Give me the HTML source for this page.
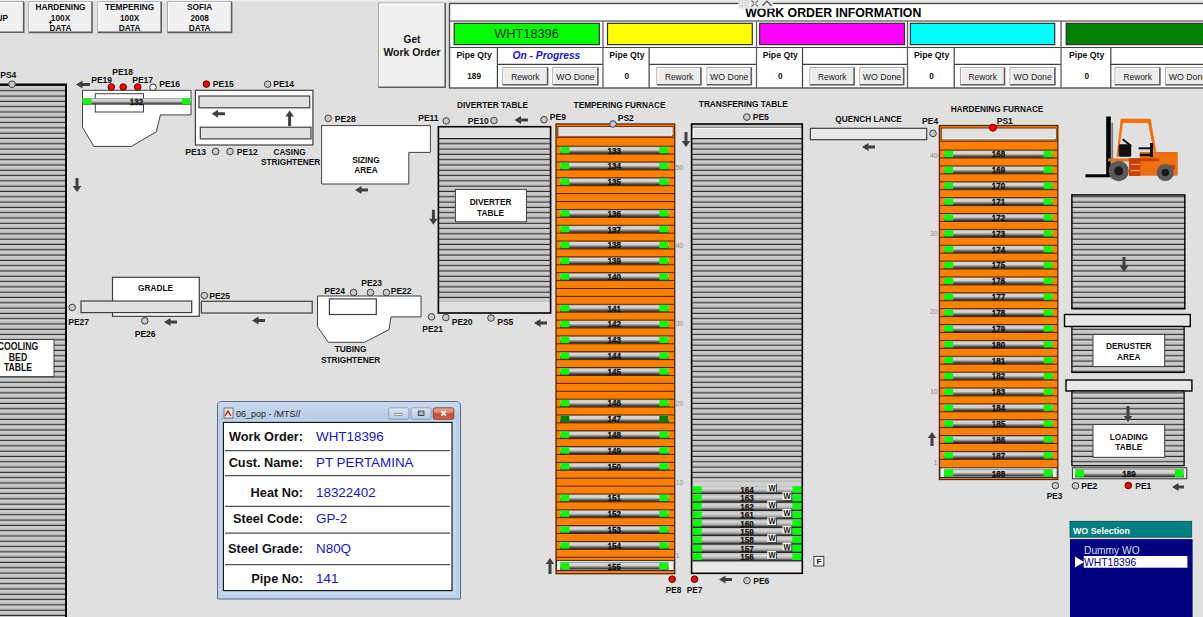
<!DOCTYPE html><html><head><meta charset="utf-8"><style>
html,body{margin:0;padding:0;background:#e0e0e0;overflow:hidden;width:1203px;height:617px}
svg{display:block;font-family:"Liberation Sans", sans-serif}
</style></head><body>
<svg width="1203" height="617" viewBox="0 0 1203 617">
<defs>
<pattern id="stripe" patternUnits="userSpaceOnUse" x="0" y="0.3" width="10" height="5.3">
<rect x="0" y="0" width="10" height="5.3" fill="#c6c6c6"/>
<rect x="0" y="0" width="10" height="1.2" fill="#2a2a2a"/>
<rect x="0" y="1.2" width="10" height="0.9" fill="#e2e2e2"/>
<rect x="0" y="4.3" width="10" height="1.0" fill="#a4a4a4"/>
</pattern>
<linearGradient id="pipeg" x1="0" y1="0" x2="0" y2="1">
<stop offset="0" stop-color="#707070"/>
<stop offset="0.15" stop-color="#d8d8d8"/>
<stop offset="0.45" stop-color="#d0d0d0"/>
<stop offset="0.8" stop-color="#5a5a5a"/>
<stop offset="1" stop-color="#1a1a1a"/>
</linearGradient>
<linearGradient id="pipet" x1="0" y1="0" x2="0" y2="1">
<stop offset="0" stop-color="#b8b8b8"/>
<stop offset="0.25" stop-color="#dadada"/>
<stop offset="0.6" stop-color="#a8a8a8"/>
<stop offset="0.8" stop-color="#404040"/>
<stop offset="0.92" stop-color="#202020"/>
<stop offset="1" stop-color="#909090"/>
</linearGradient>
<linearGradient id="btng" x1="0" y1="0" x2="0" y2="1">
<stop offset="0" stop-color="#f4f4f4"/>
<stop offset="1" stop-color="#e6e6e6"/>
</linearGradient>
<linearGradient id="titleg" x1="0" y1="0" x2="0" y2="1">
<stop offset="0" stop-color="#c9daee"/>
<stop offset="1" stop-color="#b4cbe6"/>
</linearGradient>
<linearGradient id="closeg" x1="0" y1="0" x2="0" y2="1">
<stop offset="0" stop-color="#e6b0a0"/>
<stop offset="0.45" stop-color="#d87a66"/>
<stop offset="0.55" stop-color="#c8452e"/>
<stop offset="1" stop-color="#d06a50"/>
</linearGradient>
<linearGradient id="minig" x1="0" y1="0" x2="0" y2="1">
<stop offset="0" stop-color="#dfe9f5"/>
<stop offset="0.5" stop-color="#c4d6ec"/>
<stop offset="1" stop-color="#b6cbe5"/>
</linearGradient>
</defs>
<rect x="0" y="0" width="1203" height="617" fill="#e0e0e0"/>
<rect x="0" y="0" width="1203" height="1.2" fill="#f0f0f4"/>

<rect x="-4" y="1" width="28.5" height="32" fill="#f0f0f0" stroke="none" stroke-width="1"/>
<path d="M-3.5,32.5 V1.5 H24.0" stroke="#a8a8a8" stroke-width="1" fill="none"/>
<path d="M-2.5,31.5 V2.5 H23.0" stroke="#ffffff" stroke-width="1" fill="none"/>
<path d="M-3.5,32.2 H23.7 V1.5" stroke="#5e5e5e" stroke-width="1.6" fill="none"/>
<text x="8" y="20.5" font-size="9.2" font-weight="bold" text-anchor="end" fill="#111" textLength="11.5" lengthAdjust="spacingAndGlyphs">UP</text>
<rect x="28.2" y="1.2" width="64.6" height="32.0" fill="#f0f0f0" stroke="none" stroke-width="1"/>
<path d="M28.7,32.7 V1.7 H92.3" stroke="#a8a8a8" stroke-width="1" fill="none"/>
<path d="M29.7,31.700000000000003 V2.7 H91.3" stroke="#ffffff" stroke-width="1" fill="none"/>
<path d="M28.7,32.400000000000006 H92.0 V1.7" stroke="#5e5e5e" stroke-width="1.6" fill="none"/>
<text x="60.5" y="10.2" font-size="9.2" font-weight="bold" text-anchor="middle" fill="#111" textLength="50.14" lengthAdjust="spacingAndGlyphs">HARDENING</text>
<text x="60.5" y="20.7" font-size="9.2" font-weight="bold" text-anchor="middle" fill="#111" textLength="19.34" lengthAdjust="spacingAndGlyphs">100X</text>
<text x="60.5" y="31.2" font-size="9.2" font-weight="bold" text-anchor="middle" fill="#111" textLength="21.77" lengthAdjust="spacingAndGlyphs">DATA</text>
<rect x="97.3" y="1.2" width="64.7" height="32.0" fill="#f0f0f0" stroke="none" stroke-width="1"/>
<path d="M97.8,32.7 V1.7 H161.5" stroke="#a8a8a8" stroke-width="1" fill="none"/>
<path d="M98.8,31.700000000000003 V2.7 H160.5" stroke="#ffffff" stroke-width="1" fill="none"/>
<path d="M97.8,32.400000000000006 H161.2 V1.7" stroke="#5e5e5e" stroke-width="1.6" fill="none"/>
<text x="129.65" y="10.2" font-size="9.2" font-weight="bold" text-anchor="middle" fill="#111" textLength="49.22" lengthAdjust="spacingAndGlyphs">TEMPERING</text>
<text x="129.65" y="20.7" font-size="9.2" font-weight="bold" text-anchor="middle" fill="#111" textLength="19.34" lengthAdjust="spacingAndGlyphs">100X</text>
<text x="129.65" y="31.2" font-size="9.2" font-weight="bold" text-anchor="middle" fill="#111" textLength="21.77" lengthAdjust="spacingAndGlyphs">DATA</text>
<rect x="167" y="1.2" width="65.4" height="32.0" fill="#f0f0f0" stroke="none" stroke-width="1"/>
<path d="M167.5,32.7 V1.7 H231.9" stroke="#a8a8a8" stroke-width="1" fill="none"/>
<path d="M168.5,31.700000000000003 V2.7 H230.9" stroke="#ffffff" stroke-width="1" fill="none"/>
<path d="M167.5,32.400000000000006 H231.6 V1.7" stroke="#5e5e5e" stroke-width="1.6" fill="none"/>
<text x="199.7" y="10.2" font-size="9.2" font-weight="bold" text-anchor="middle" fill="#111" textLength="25.3" lengthAdjust="spacingAndGlyphs">SOFIA</text>
<text x="199.7" y="20.7" font-size="9.2" font-weight="bold" text-anchor="middle" fill="#111" textLength="18.42" lengthAdjust="spacingAndGlyphs">2008</text>
<text x="199.7" y="31.2" font-size="9.2" font-weight="bold" text-anchor="middle" fill="#111" textLength="21.77" lengthAdjust="spacingAndGlyphs">DATA</text>
<rect x="378" y="2.5" width="68" height="85.5" fill="#f0f0f0" stroke="none" stroke-width="1"/>
<path d="M378.5,87.5 V3.0 H445.5" stroke="#a8a8a8" stroke-width="1" fill="none"/>
<path d="M379.5,86.5 V4.0 H444.5" stroke="#ffffff" stroke-width="1" fill="none"/>
<path d="M378.5,87.2 H445.2 V3.0" stroke="#5e5e5e" stroke-width="1.6" fill="none"/>
<text x="412" y="42.6" font-size="10.2" font-weight="bold" text-anchor="middle" fill="#111" textLength="17.0" lengthAdjust="spacingAndGlyphs">Get</text>
<text x="412" y="55.6" font-size="10.2" font-weight="bold" text-anchor="middle" fill="#111" textLength="57.04" lengthAdjust="spacingAndGlyphs">Work Order</text>
<rect x="449.5" y="3.5" width="760.5" height="84.5" fill="#ffffff" stroke="#505050" stroke-width="1.4"/>
<line x1="449" y1="21" x2="1203" y2="21" stroke="#303030" stroke-width="1.2"/>
<text x="833.3" y="16.6" font-size="12.3" font-weight="bold" text-anchor="middle" fill="#000" textLength="176.06" lengthAdjust="spacingAndGlyphs">WORK ORDER INFORMATION</text>
<rect x="454.2" y="23.3" width="145.1" height="21.3" fill="#00ff00" stroke="#303030" stroke-width="1.2"/>
<line x1="449.2" y1="47.5" x2="603" y2="47.5" stroke="#404040" stroke-width="1.2"/>
<line x1="497.4" y1="47.5" x2="497.4" y2="88" stroke="#404040" stroke-width="1.2"/>
<line x1="497.4" y1="64.4" x2="603" y2="64.4" stroke="#404040" stroke-width="1.2"/>
<text x="474.1" y="58" font-size="8.7" font-weight="bold" text-anchor="middle" fill="#111" textLength="35.29" lengthAdjust="spacingAndGlyphs">Pipe Qty</text>
<text x="474.1" y="78.6" font-size="8.7" font-weight="bold" text-anchor="middle" fill="#111" textLength="13.79" lengthAdjust="spacingAndGlyphs">189</text>
<rect x="502.2" y="67" width="46.2" height="18.6" fill="#ececec" stroke="none" stroke-width="1"/>
<path d="M502.7,85.1 V67.5 H547.9" stroke="#a8a8a8" stroke-width="1" fill="none"/>
<path d="M503.7,84.1 V68.5 H546.9" stroke="#ffffff" stroke-width="1" fill="none"/>
<path d="M502.7,84.8 H547.6 V67.5" stroke="#5e5e5e" stroke-width="1.6" fill="none"/>
<rect x="552.3" y="67" width="46.4" height="18.6" fill="#ececec" stroke="none" stroke-width="1"/>
<path d="M552.8,85.1 V67.5 H598.2" stroke="#a8a8a8" stroke-width="1" fill="none"/>
<path d="M553.8,84.1 V68.5 H597.2" stroke="#ffffff" stroke-width="1" fill="none"/>
<path d="M552.8,84.8 H597.9000000000001 V67.5" stroke="#5e5e5e" stroke-width="1.6" fill="none"/>
<text x="525.3" y="80" font-size="9.5" font-weight="normal" text-anchor="middle" fill="#222" textLength="28.34" lengthAdjust="spacingAndGlyphs">Rework</text>
<text x="575.5" y="80" font-size="9.5" font-weight="normal" text-anchor="middle" fill="#222" textLength="38.37" lengthAdjust="spacingAndGlyphs">WO Done</text>
<line x1="603" y1="21" x2="603" y2="88" stroke="#606060" stroke-width="1.3"/>
<rect x="607.5" y="23.3" width="144.8" height="21.3" fill="#ffff00" stroke="#303030" stroke-width="1.2"/>
<line x1="603" y1="47.5" x2="756.5" y2="47.5" stroke="#404040" stroke-width="1.2"/>
<line x1="649.1" y1="47.5" x2="649.1" y2="88" stroke="#404040" stroke-width="1.2"/>
<line x1="649.1" y1="64.4" x2="756.5" y2="64.4" stroke="#404040" stroke-width="1.2"/>
<text x="626.85" y="58" font-size="8.7" font-weight="bold" text-anchor="middle" fill="#111" textLength="35.29" lengthAdjust="spacingAndGlyphs">Pipe Qty</text>
<text x="626.85" y="78.6" font-size="8.7" font-weight="bold" text-anchor="middle" fill="#111" textLength="4.6" lengthAdjust="spacingAndGlyphs">0</text>
<rect x="656.4" y="67" width="45.3" height="18.6" fill="#ececec" stroke="none" stroke-width="1"/>
<path d="M656.9,85.1 V67.5 H701.2" stroke="#a8a8a8" stroke-width="1" fill="none"/>
<path d="M657.9,84.1 V68.5 H700.2" stroke="#ffffff" stroke-width="1" fill="none"/>
<path d="M656.9,84.8 H700.9000000000001 V67.5" stroke="#5e5e5e" stroke-width="1.6" fill="none"/>
<rect x="706.5" y="67" width="45.6" height="18.6" fill="#ececec" stroke="none" stroke-width="1"/>
<path d="M707.0,85.1 V67.5 H751.6" stroke="#a8a8a8" stroke-width="1" fill="none"/>
<path d="M708.0,84.1 V68.5 H750.6" stroke="#ffffff" stroke-width="1" fill="none"/>
<path d="M707.0,84.8 H751.3000000000001 V67.5" stroke="#5e5e5e" stroke-width="1.6" fill="none"/>
<text x="679.05" y="80" font-size="9.5" font-weight="normal" text-anchor="middle" fill="#222" textLength="28.34" lengthAdjust="spacingAndGlyphs">Rework</text>
<text x="729.3" y="80" font-size="9.5" font-weight="normal" text-anchor="middle" fill="#222" textLength="38.37" lengthAdjust="spacingAndGlyphs">WO Done</text>
<line x1="756.5" y1="21" x2="756.5" y2="88" stroke="#606060" stroke-width="1.3"/>
<rect x="759.7" y="23.3" width="144.8" height="21.3" fill="#ff00ff" stroke="#303030" stroke-width="1.2"/>
<line x1="756.5" y1="47.5" x2="907.5" y2="47.5" stroke="#404040" stroke-width="1.2"/>
<line x1="802.5" y1="47.5" x2="802.5" y2="88" stroke="#404040" stroke-width="1.2"/>
<line x1="802.5" y1="64.4" x2="907.5" y2="64.4" stroke="#404040" stroke-width="1.2"/>
<text x="780.3" y="58" font-size="8.7" font-weight="bold" text-anchor="middle" fill="#111" textLength="35.29" lengthAdjust="spacingAndGlyphs">Pipe Qty</text>
<text x="780.3" y="78.6" font-size="8.7" font-weight="bold" text-anchor="middle" fill="#111" textLength="4.6" lengthAdjust="spacingAndGlyphs">0</text>
<rect x="809.5" y="67" width="45.4" height="18.6" fill="#ececec" stroke="none" stroke-width="1"/>
<path d="M810.0,85.1 V67.5 H854.4" stroke="#a8a8a8" stroke-width="1" fill="none"/>
<path d="M811.0,84.1 V68.5 H853.4" stroke="#ffffff" stroke-width="1" fill="none"/>
<path d="M810.0,84.8 H854.1 V67.5" stroke="#5e5e5e" stroke-width="1.6" fill="none"/>
<rect x="859.4" y="67" width="45.1" height="18.6" fill="#ececec" stroke="none" stroke-width="1"/>
<path d="M859.9,85.1 V67.5 H904.0" stroke="#a8a8a8" stroke-width="1" fill="none"/>
<path d="M860.9,84.1 V68.5 H903.0" stroke="#ffffff" stroke-width="1" fill="none"/>
<path d="M859.9,84.8 H903.7 V67.5" stroke="#5e5e5e" stroke-width="1.6" fill="none"/>
<text x="832.2" y="80" font-size="9.5" font-weight="normal" text-anchor="middle" fill="#222" textLength="28.34" lengthAdjust="spacingAndGlyphs">Rework</text>
<text x="881.95" y="80" font-size="9.5" font-weight="normal" text-anchor="middle" fill="#222" textLength="38.37" lengthAdjust="spacingAndGlyphs">WO Done</text>
<line x1="907.5" y1="21" x2="907.5" y2="88" stroke="#606060" stroke-width="1.3"/>
<rect x="910.4" y="23.3" width="144.3" height="21.3" fill="#00ffff" stroke="#303030" stroke-width="1.2"/>
<line x1="907.5" y1="47.5" x2="1061" y2="47.5" stroke="#404040" stroke-width="1.2"/>
<line x1="954.2" y1="47.5" x2="954.2" y2="88" stroke="#404040" stroke-width="1.2"/>
<line x1="954.2" y1="64.4" x2="1061" y2="64.4" stroke="#404040" stroke-width="1.2"/>
<text x="931.65" y="58" font-size="8.7" font-weight="bold" text-anchor="middle" fill="#111" textLength="35.29" lengthAdjust="spacingAndGlyphs">Pipe Qty</text>
<text x="931.65" y="78.6" font-size="8.7" font-weight="bold" text-anchor="middle" fill="#111" textLength="4.6" lengthAdjust="spacingAndGlyphs">0</text>
<rect x="960" y="67" width="45.3" height="18.6" fill="#ececec" stroke="none" stroke-width="1"/>
<path d="M960.5,85.1 V67.5 H1004.8" stroke="#a8a8a8" stroke-width="1" fill="none"/>
<path d="M961.5,84.1 V68.5 H1003.8" stroke="#ffffff" stroke-width="1" fill="none"/>
<path d="M960.5,84.8 H1004.5 V67.5" stroke="#5e5e5e" stroke-width="1.6" fill="none"/>
<rect x="1009.6" y="67" width="46.1" height="18.6" fill="#ececec" stroke="none" stroke-width="1"/>
<path d="M1010.1,85.1 V67.5 H1055.2" stroke="#a8a8a8" stroke-width="1" fill="none"/>
<path d="M1011.1,84.1 V68.5 H1054.2" stroke="#ffffff" stroke-width="1" fill="none"/>
<path d="M1010.1,84.8 H1054.9 V67.5" stroke="#5e5e5e" stroke-width="1.6" fill="none"/>
<text x="982.65" y="80" font-size="9.5" font-weight="normal" text-anchor="middle" fill="#222" textLength="28.34" lengthAdjust="spacingAndGlyphs">Rework</text>
<text x="1032.65" y="80" font-size="9.5" font-weight="normal" text-anchor="middle" fill="#222" textLength="38.37" lengthAdjust="spacingAndGlyphs">WO Done</text>
<line x1="1061" y1="21" x2="1061" y2="88" stroke="#606060" stroke-width="1.3"/>
<rect x="1066.2" y="23.3" width="144.8" height="21.3" fill="#008000" stroke="#303030" stroke-width="1.2"/>
<line x1="1061" y1="47.5" x2="1210" y2="47.5" stroke="#404040" stroke-width="1.2"/>
<line x1="1110.8" y1="47.5" x2="1110.8" y2="88" stroke="#404040" stroke-width="1.2"/>
<line x1="1110.8" y1="64.4" x2="1210" y2="64.4" stroke="#404040" stroke-width="1.2"/>
<text x="1086.7" y="58" font-size="8.7" font-weight="bold" text-anchor="middle" fill="#111" textLength="35.29" lengthAdjust="spacingAndGlyphs">Pipe Qty</text>
<text x="1086.7" y="78.6" font-size="8.7" font-weight="bold" text-anchor="middle" fill="#111" textLength="4.6" lengthAdjust="spacingAndGlyphs">0</text>
<rect x="1114.6" y="67" width="46.1" height="18.6" fill="#ececec" stroke="none" stroke-width="1"/>
<path d="M1115.1,85.1 V67.5 H1160.2" stroke="#a8a8a8" stroke-width="1" fill="none"/>
<path d="M1116.1,84.1 V68.5 H1159.2" stroke="#ffffff" stroke-width="1" fill="none"/>
<path d="M1115.1,84.8 H1159.9 V67.5" stroke="#5e5e5e" stroke-width="1.6" fill="none"/>
<rect x="1165" y="67" width="46" height="18.6" fill="#ececec" stroke="none" stroke-width="1"/>
<path d="M1165.5,85.1 V67.5 H1210.5" stroke="#a8a8a8" stroke-width="1" fill="none"/>
<path d="M1166.5,84.1 V68.5 H1209.5" stroke="#ffffff" stroke-width="1" fill="none"/>
<path d="M1165.5,84.8 H1210.2 V67.5" stroke="#5e5e5e" stroke-width="1.6" fill="none"/>
<text x="1137.65" y="80" font-size="9.5" font-weight="normal" text-anchor="middle" fill="#222" textLength="28.34" lengthAdjust="spacingAndGlyphs">Rework</text>
<text x="1188.0" y="80" font-size="9.5" font-weight="normal" text-anchor="middle" fill="#222" textLength="38.37" lengthAdjust="spacingAndGlyphs">WO Done</text>
<text x="526.5" y="37.6" font-size="12.8" font-weight="normal" text-anchor="middle" fill="#0a2a0a" textLength="64.73" lengthAdjust="spacingAndGlyphs">WHT18396</text>
<text x="546.4" y="59.3" font-size="10.8" font-weight="bold" text-anchor="middle" fill="#1414d8" textLength="67.84" lengthAdjust="spacingAndGlyphs" font-style="italic">On - Progress</text>
<rect x="-2" y="85" width="68" height="532" fill="url(#stripe)" stroke="none" stroke-width="1"/>
<path d="M-2,84.6 H66 V617" stroke="#000" stroke-width="2" fill="none"/>
<circle cx="12" cy="84.2" r="3.3" fill="#c8c8c8" stroke="#404040" stroke-width="1"/>
<text x="0.2" y="77.9" font-size="9.6" font-weight="bold" text-anchor="start" fill="#111" textLength="16.15" lengthAdjust="spacingAndGlyphs">PS4</text>
<polygon points="75.5,178 78.5,178 78.5,186 81.3,186 77,192 72.7,186 75.5,186" fill="#404040"/>
<rect x="-2" y="339.5" width="56" height="37.1" fill="#fff" stroke="#404040" stroke-width="1"/>
<text x="18" y="350.3" font-size="10.2" font-weight="bold" text-anchor="middle" fill="#111" textLength="40.46" lengthAdjust="spacingAndGlyphs">COOLING</text>
<text x="18" y="360.7" font-size="10.2" font-weight="bold" text-anchor="middle" fill="#111" textLength="18.31" lengthAdjust="spacingAndGlyphs">BED</text>
<text x="18" y="371.1" font-size="10.2" font-weight="bold" text-anchor="middle" fill="#111" textLength="28.25" lengthAdjust="spacingAndGlyphs">TABLE</text>
<polygon points="82.5,90.3 191,90.3 191,114.9 160.4,114.9 156.3,131.8 131.3,146.4 93.9,146.4 82.5,127.3" fill="#fff" stroke="#404040" stroke-width="1"/>
<rect x="95.3" y="93.7" width="48.2" height="18.3" fill="none" stroke="#404040" stroke-width="1"/>
<rect x="82.5" y="98.2" width="108.5" height="6.4" fill="url(#pipeg)" stroke="none" stroke-width="1"/>
<rect x="82.9" y="98.60000000000001" width="8.6" height="5.6" fill="#00ff00" stroke="none" stroke-width="1" stroke="#101010" stroke-width="0.8"/>
<rect x="182" y="98.60000000000001" width="8.6" height="5.6" fill="#00ff00" stroke="none" stroke-width="1" stroke="#101010" stroke-width="0.8"/>
<text x="136.5" y="104.9" font-size="9.5" font-weight="bold" text-anchor="middle" fill="#111" textLength="13.47" lengthAdjust="spacingAndGlyphs" stroke="#111" stroke-width="0.3">132</text>
<circle cx="111.3" cy="87" r="3.3" fill="#ff0000" stroke="#400000" stroke-width="0.9"/>
<circle cx="123.2" cy="87" r="3.3" fill="#ff0000" stroke="#400000" stroke-width="0.9"/>
<circle cx="137.7" cy="87" r="3.3" fill="#ff0000" stroke="#400000" stroke-width="0.9"/>
<circle cx="153" cy="87.3" r="3.3" fill="#f4f4f4" stroke="#303030" stroke-width="1"/>
<polygon points="76,84.5 82.5,80.5 82.5,83.0 90,83.0 90,86.0 82.5,86.0 82.5,88.5" fill="#404040"/>
<text x="91.2" y="82.6" font-size="9.6" font-weight="bold" text-anchor="start" fill="#111" textLength="20.9" lengthAdjust="spacingAndGlyphs">PE19</text>
<text x="112.2" y="74.9" font-size="9.6" font-weight="bold" text-anchor="start" fill="#111" textLength="20.9" lengthAdjust="spacingAndGlyphs">PE18</text>
<text x="132.2" y="82.6" font-size="9.6" font-weight="bold" text-anchor="start" fill="#111" textLength="20.9" lengthAdjust="spacingAndGlyphs">PE17</text>
<text x="159.2" y="86.9" font-size="9.6" font-weight="bold" text-anchor="start" fill="#111" textLength="20.9" lengthAdjust="spacingAndGlyphs">PE16</text>
<rect x="195.4" y="90.3" width="117.5" height="54.7" fill="#fff" stroke="#404040" stroke-width="1.2"/>
<rect x="199" y="96" width="110.7" height="11.8" fill="#e0e0e0" stroke="#404040" stroke-width="1.2"/>
<rect x="200.3" y="127.2" width="110.7" height="11.7" fill="#e0e0e0" stroke="#404040" stroke-width="1.2"/>
<polygon points="211.6,113.8 218.1,109.8 218.1,112.3 225,112.3 225,115.3 218.1,115.3 218.1,117.8" fill="#404040"/>
<polygon points="289.6,110.5 293.90000000000003,116.5 291.1,116.5 291.1,126 288.1,126 288.1,116.5 285.3,116.5" fill="#404040"/>
<circle cx="206.4" cy="84.1" r="3.3" fill="#ff0000" stroke="#400000" stroke-width="0.9"/>
<text x="212.8" y="87.4" font-size="9.6" font-weight="bold" text-anchor="start" fill="#111" textLength="20.9" lengthAdjust="spacingAndGlyphs">PE15</text>
<circle cx="267.7" cy="84.2" r="3.3" fill="#c8c8c8" stroke="#404040" stroke-width="1"/>
<text x="273.2" y="87.4" font-size="9.6" font-weight="bold" text-anchor="start" fill="#111" textLength="20.9" lengthAdjust="spacingAndGlyphs">PE14</text>
<text x="185.2" y="154.9" font-size="9.6" font-weight="bold" text-anchor="start" fill="#111" textLength="20.9" lengthAdjust="spacingAndGlyphs">PE13</text>
<circle cx="215.6" cy="151.5" r="3.3" fill="#c8c8c8" stroke="#404040" stroke-width="1"/>
<circle cx="230" cy="151.5" r="3.3" fill="#c8c8c8" stroke="#404040" stroke-width="1"/>
<text x="236.8" y="154.9" font-size="9.6" font-weight="bold" text-anchor="start" fill="#111" textLength="20.9" lengthAdjust="spacingAndGlyphs">PE12</text>
<text x="289.5" y="154.5" font-size="9.5" font-weight="bold" text-anchor="middle" fill="#111" textLength="32.14" lengthAdjust="spacingAndGlyphs">CASING</text>
<text x="290.5" y="165" font-size="9.5" font-weight="bold" text-anchor="middle" fill="#111" textLength="59.24" lengthAdjust="spacingAndGlyphs">STRIGHTENER</text>
<polygon points="321.6,125.6 430.4,125.6 430.4,152.4 408.8,152.4 408.8,184 321.6,184" fill="#fff" stroke="#404040" stroke-width="1"/>
<circle cx="328.2" cy="118.3" r="3.3" fill="#c8c8c8" stroke="#404040" stroke-width="1"/>
<text x="334.8" y="121.7" font-size="9.6" font-weight="bold" text-anchor="start" fill="#111" textLength="20.9" lengthAdjust="spacingAndGlyphs">PE28</text>
<text x="418.2" y="120.7" font-size="9.6" font-weight="bold" text-anchor="start" fill="#111" textLength="20.43" lengthAdjust="spacingAndGlyphs">PE11</text>
<circle cx="446.2" cy="120.9" r="3.3" fill="#c8c8c8" stroke="#404040" stroke-width="1"/>
<text x="366" y="162.5" font-size="9.5" font-weight="bold" text-anchor="middle" fill="#111" textLength="27.55" lengthAdjust="spacingAndGlyphs">SIZING</text>
<text x="366" y="173" font-size="9.5" font-weight="bold" text-anchor="middle" fill="#111" textLength="23.42" lengthAdjust="spacingAndGlyphs">AREA</text>
<polygon points="355,190 361.5,186 361.5,188.5 368,188.5 368,191.5 361.5,191.5 361.5,194" fill="#404040"/>
<rect x="438.9" y="138.4" width="111.1" height="163.4" fill="url(#stripe)" stroke="none" stroke-width="1"/>
<rect x="438.9" y="127.2" width="111.1" height="11.2" fill="#e0e0e0" stroke="none" stroke-width="1"/>
<rect x="438.9" y="301.8" width="111.1" height="10.8" fill="#e0e0e0" stroke="none" stroke-width="1"/>
<line x1="439" y1="138.6" x2="550" y2="138.6" stroke="#202020" stroke-width="1.2"/>
<rect x="438.4" y="126.7" width="112.2" height="186.3" fill="none" stroke="#000" stroke-width="1.6"/>
<rect x="455.4" y="189.4" width="71.0" height="32.4" fill="#fff" stroke="#404040" stroke-width="1"/>
<text x="490.5" y="205.4" font-size="9.6" font-weight="bold" text-anchor="middle" fill="#111" textLength="41.74" lengthAdjust="spacingAndGlyphs">DIVERTER</text>
<text x="490.5" y="215.9" font-size="9.6" font-weight="bold" text-anchor="middle" fill="#111" textLength="26.9" lengthAdjust="spacingAndGlyphs">TABLE</text>
<polygon points="431.9,209.8 434.9,209.8 434.9,218.8 437.7,218.8 433.4,224.8 429.09999999999997,218.8 431.9,218.8" fill="#404040"/>
<text x="619.5" y="107.9" font-size="9.5" font-weight="bold" text-anchor="middle" fill="#111" textLength="91.84" lengthAdjust="spacingAndGlyphs">TEMPERING FURNACE</text>
<text x="492.5" y="107.5" font-size="9.5" font-weight="bold" text-anchor="middle" fill="#111" textLength="71.02" lengthAdjust="spacingAndGlyphs">DIVERTER TABLE</text>
<text x="467.8" y="123.7" font-size="9.6" font-weight="bold" text-anchor="start" fill="#111" textLength="20.9" lengthAdjust="spacingAndGlyphs">PE10</text>
<circle cx="494" cy="120.5" r="3.3" fill="#c8c8c8" stroke="#404040" stroke-width="1"/>
<polygon points="514.5,120 521.0,116 521.0,118.5 528,118.5 528,121.5 521.0,121.5 521.0,124" fill="#404040"/>
<circle cx="544" cy="119.7" r="3.3" fill="#c8c8c8" stroke="#404040" stroke-width="1"/>
<text x="549.8" y="119.9" font-size="9.6" font-weight="bold" text-anchor="start" fill="#111" textLength="16.15" lengthAdjust="spacingAndGlyphs">PE9</text>
<circle cx="431.5" cy="316.8" r="3.3" fill="#c8c8c8" stroke="#404040" stroke-width="1"/>
<text x="422.2" y="331.9" font-size="9.6" font-weight="bold" text-anchor="start" fill="#111" textLength="20.9" lengthAdjust="spacingAndGlyphs">PE21</text>
<circle cx="445.8" cy="317.5" r="3.3" fill="#c8c8c8" stroke="#404040" stroke-width="1"/>
<text x="451.7" y="324.7" font-size="9.6" font-weight="bold" text-anchor="start" fill="#111" textLength="20.9" lengthAdjust="spacingAndGlyphs">PE20</text>
<circle cx="491" cy="318" r="3.3" fill="#c8c8c8" stroke="#404040" stroke-width="1"/>
<text x="497.2" y="324.7" font-size="9.6" font-weight="bold" text-anchor="start" fill="#111" textLength="16.15" lengthAdjust="spacingAndGlyphs">PS5</text>
<polygon points="534,323 540.5,319 540.5,321.5 547,321.5 547,324.5 540.5,324.5 540.5,327" fill="#404040"/>
<rect x="556" y="124" width="118.7" height="449.7" fill="#ff8000" stroke="#5a2800" stroke-width="1.3"/>
<rect x="557.8" y="126.5" width="115.1" height="9.5" fill="#e0e0e0" stroke="#6a3000" stroke-width="1"/>
<path d="M558.6,135.2 H672.1 V127.3" stroke="#ffffff" stroke-width="1" fill="none"/>
<line x1="556" y1="137.6" x2="674.7" y2="137.6" stroke="#6a3000" stroke-width="1"/>
<line x1="556" y1="146.2" x2="674.7" y2="146.2" stroke="#4a2200" stroke-width="1"/>
<line x1="556" y1="154.1" x2="674.7" y2="154.1" stroke="#4a2200" stroke-width="1"/>
<line x1="556" y1="162.01" x2="674.7" y2="162.01" stroke="#4a2200" stroke-width="1"/>
<line x1="556" y1="169.91" x2="674.7" y2="169.91" stroke="#4a2200" stroke-width="1"/>
<line x1="556" y1="177.82" x2="674.7" y2="177.82" stroke="#4a2200" stroke-width="1"/>
<line x1="556" y1="185.72" x2="674.7" y2="185.72" stroke="#4a2200" stroke-width="1"/>
<line x1="556" y1="193.63" x2="674.7" y2="193.63" stroke="#4a2200" stroke-width="1"/>
<line x1="556" y1="201.53" x2="674.7" y2="201.53" stroke="#4a2200" stroke-width="1"/>
<line x1="556" y1="209.44" x2="674.7" y2="209.44" stroke="#4a2200" stroke-width="1"/>
<line x1="556" y1="217.34" x2="674.7" y2="217.34" stroke="#4a2200" stroke-width="1"/>
<line x1="556" y1="225.25" x2="674.7" y2="225.25" stroke="#4a2200" stroke-width="1"/>
<line x1="556" y1="233.16" x2="674.7" y2="233.16" stroke="#4a2200" stroke-width="1"/>
<line x1="556" y1="241.06" x2="674.7" y2="241.06" stroke="#4a2200" stroke-width="1"/>
<line x1="556" y1="248.97" x2="674.7" y2="248.97" stroke="#4a2200" stroke-width="1"/>
<line x1="556" y1="256.87" x2="674.7" y2="256.87" stroke="#4a2200" stroke-width="1"/>
<line x1="556" y1="264.77" x2="674.7" y2="264.77" stroke="#4a2200" stroke-width="1"/>
<line x1="556" y1="272.68" x2="674.7" y2="272.68" stroke="#4a2200" stroke-width="1"/>
<line x1="556" y1="280.58" x2="674.7" y2="280.58" stroke="#4a2200" stroke-width="1"/>
<line x1="556" y1="288.49" x2="674.7" y2="288.49" stroke="#4a2200" stroke-width="1"/>
<line x1="556" y1="296.39" x2="674.7" y2="296.39" stroke="#4a2200" stroke-width="1"/>
<line x1="556" y1="304.3" x2="674.7" y2="304.3" stroke="#4a2200" stroke-width="1"/>
<line x1="556" y1="312.2" x2="674.7" y2="312.2" stroke="#4a2200" stroke-width="1"/>
<line x1="556" y1="320.11" x2="674.7" y2="320.11" stroke="#4a2200" stroke-width="1"/>
<line x1="556" y1="328.01" x2="674.7" y2="328.01" stroke="#4a2200" stroke-width="1"/>
<line x1="556" y1="335.92" x2="674.7" y2="335.92" stroke="#4a2200" stroke-width="1"/>
<line x1="556" y1="343.82" x2="674.7" y2="343.82" stroke="#4a2200" stroke-width="1"/>
<line x1="556" y1="351.73" x2="674.7" y2="351.73" stroke="#4a2200" stroke-width="1"/>
<line x1="556" y1="359.63" x2="674.7" y2="359.63" stroke="#4a2200" stroke-width="1"/>
<line x1="556" y1="367.54" x2="674.7" y2="367.54" stroke="#4a2200" stroke-width="1"/>
<line x1="556" y1="375.44" x2="674.7" y2="375.44" stroke="#4a2200" stroke-width="1"/>
<line x1="556" y1="383.35" x2="674.7" y2="383.35" stroke="#4a2200" stroke-width="1"/>
<line x1="556" y1="391.25" x2="674.7" y2="391.25" stroke="#4a2200" stroke-width="1"/>
<line x1="556" y1="399.16" x2="674.7" y2="399.16" stroke="#4a2200" stroke-width="1"/>
<line x1="556" y1="407.06" x2="674.7" y2="407.06" stroke="#4a2200" stroke-width="1"/>
<line x1="556" y1="414.97" x2="674.7" y2="414.97" stroke="#4a2200" stroke-width="1"/>
<line x1="556" y1="422.87" x2="674.7" y2="422.87" stroke="#4a2200" stroke-width="1"/>
<line x1="556" y1="430.78" x2="674.7" y2="430.78" stroke="#4a2200" stroke-width="1"/>
<line x1="556" y1="438.68" x2="674.7" y2="438.68" stroke="#4a2200" stroke-width="1"/>
<line x1="556" y1="446.59" x2="674.7" y2="446.59" stroke="#4a2200" stroke-width="1"/>
<line x1="556" y1="454.49" x2="674.7" y2="454.49" stroke="#4a2200" stroke-width="1"/>
<line x1="556" y1="462.4" x2="674.7" y2="462.4" stroke="#4a2200" stroke-width="1"/>
<line x1="556" y1="470.3" x2="674.7" y2="470.3" stroke="#4a2200" stroke-width="1"/>
<line x1="556" y1="478.21" x2="674.7" y2="478.21" stroke="#4a2200" stroke-width="1"/>
<line x1="556" y1="486.11" x2="674.7" y2="486.11" stroke="#4a2200" stroke-width="1"/>
<line x1="556" y1="494.02" x2="674.7" y2="494.02" stroke="#4a2200" stroke-width="1"/>
<line x1="556" y1="501.92" x2="674.7" y2="501.92" stroke="#4a2200" stroke-width="1"/>
<line x1="556" y1="509.83" x2="674.7" y2="509.83" stroke="#4a2200" stroke-width="1"/>
<line x1="556" y1="517.73" x2="674.7" y2="517.73" stroke="#4a2200" stroke-width="1"/>
<line x1="556" y1="525.64" x2="674.7" y2="525.64" stroke="#4a2200" stroke-width="1"/>
<line x1="556" y1="533.54" x2="674.7" y2="533.54" stroke="#4a2200" stroke-width="1"/>
<line x1="556" y1="541.45" x2="674.7" y2="541.45" stroke="#4a2200" stroke-width="1"/>
<line x1="556" y1="549.35" x2="674.7" y2="549.35" stroke="#4a2200" stroke-width="1"/>
<line x1="556" y1="557.26" x2="674.7" y2="557.26" stroke="#4a2200" stroke-width="1"/>
<rect x="560" y="146.6" width="108.7" height="7.0" fill="url(#pipeg)" stroke="none" stroke-width="1"/>
<rect x="560.4" y="147.0" width="8.9" height="6.2" fill="#00ff00" stroke="none" stroke-width="1" stroke="#101010" stroke-width="0.8"/>
<rect x="659.4000000000001" y="147.0" width="8.9" height="6.2" fill="#00ff00" stroke="none" stroke-width="1" stroke="#101010" stroke-width="0.8"/>
<text x="614.35" y="153.5" font-size="9.5" font-weight="bold" text-anchor="middle" fill="#111" textLength="13.47" lengthAdjust="spacingAndGlyphs" stroke="#111" stroke-width="0.3">133</text>
<rect x="560" y="162.41" width="108.7" height="7.0" fill="url(#pipeg)" stroke="none" stroke-width="1"/>
<rect x="560.4" y="162.81" width="8.9" height="6.2" fill="#00ff00" stroke="none" stroke-width="1" stroke="#101010" stroke-width="0.8"/>
<rect x="659.4000000000001" y="162.81" width="8.9" height="6.2" fill="#00ff00" stroke="none" stroke-width="1" stroke="#101010" stroke-width="0.8"/>
<text x="614.35" y="169.31" font-size="9.5" font-weight="bold" text-anchor="middle" fill="#111" textLength="13.47" lengthAdjust="spacingAndGlyphs" stroke="#111" stroke-width="0.3">134</text>
<rect x="560" y="178.22" width="108.7" height="7.0" fill="url(#pipeg)" stroke="none" stroke-width="1"/>
<rect x="560.4" y="178.62" width="8.9" height="6.2" fill="#00ff00" stroke="none" stroke-width="1" stroke="#101010" stroke-width="0.8"/>
<rect x="659.4000000000001" y="178.62" width="8.9" height="6.2" fill="#00ff00" stroke="none" stroke-width="1" stroke="#101010" stroke-width="0.8"/>
<text x="614.35" y="185.12" font-size="9.5" font-weight="bold" text-anchor="middle" fill="#111" textLength="13.47" lengthAdjust="spacingAndGlyphs" stroke="#111" stroke-width="0.3">135</text>
<rect x="560" y="209.84" width="108.7" height="7.0" fill="url(#pipeg)" stroke="none" stroke-width="1"/>
<rect x="560.4" y="210.24" width="8.9" height="6.2" fill="#00ff00" stroke="none" stroke-width="1" stroke="#101010" stroke-width="0.8"/>
<rect x="659.4000000000001" y="210.24" width="8.9" height="6.2" fill="#00ff00" stroke="none" stroke-width="1" stroke="#101010" stroke-width="0.8"/>
<text x="614.35" y="216.74" font-size="9.5" font-weight="bold" text-anchor="middle" fill="#111" textLength="13.47" lengthAdjust="spacingAndGlyphs" stroke="#111" stroke-width="0.3">136</text>
<rect x="560" y="225.65" width="108.7" height="7.0" fill="url(#pipeg)" stroke="none" stroke-width="1"/>
<rect x="560.4" y="226.05" width="8.9" height="6.2" fill="#00ff00" stroke="none" stroke-width="1" stroke="#101010" stroke-width="0.8"/>
<rect x="659.4000000000001" y="226.05" width="8.9" height="6.2" fill="#00ff00" stroke="none" stroke-width="1" stroke="#101010" stroke-width="0.8"/>
<text x="614.35" y="232.55" font-size="9.5" font-weight="bold" text-anchor="middle" fill="#111" textLength="13.47" lengthAdjust="spacingAndGlyphs" stroke="#111" stroke-width="0.3">137</text>
<rect x="560" y="241.46" width="108.7" height="7.0" fill="url(#pipeg)" stroke="none" stroke-width="1"/>
<rect x="560.4" y="241.86" width="8.9" height="6.2" fill="#00ff00" stroke="none" stroke-width="1" stroke="#101010" stroke-width="0.8"/>
<rect x="659.4000000000001" y="241.86" width="8.9" height="6.2" fill="#00ff00" stroke="none" stroke-width="1" stroke="#101010" stroke-width="0.8"/>
<text x="614.35" y="248.36" font-size="9.5" font-weight="bold" text-anchor="middle" fill="#111" textLength="13.47" lengthAdjust="spacingAndGlyphs" stroke="#111" stroke-width="0.3">138</text>
<rect x="560" y="257.27" width="108.7" height="7.0" fill="url(#pipeg)" stroke="none" stroke-width="1"/>
<rect x="560.4" y="257.66999999999996" width="8.9" height="6.2" fill="#00ff00" stroke="none" stroke-width="1" stroke="#101010" stroke-width="0.8"/>
<rect x="659.4000000000001" y="257.66999999999996" width="8.9" height="6.2" fill="#00ff00" stroke="none" stroke-width="1" stroke="#101010" stroke-width="0.8"/>
<text x="614.35" y="264.17" font-size="9.5" font-weight="bold" text-anchor="middle" fill="#111" textLength="13.47" lengthAdjust="spacingAndGlyphs" stroke="#111" stroke-width="0.3">139</text>
<rect x="560" y="273.08" width="108.7" height="7.0" fill="url(#pipeg)" stroke="none" stroke-width="1"/>
<rect x="560.4" y="273.47999999999996" width="8.9" height="6.2" fill="#00ff00" stroke="none" stroke-width="1" stroke="#101010" stroke-width="0.8"/>
<rect x="659.4000000000001" y="273.47999999999996" width="8.9" height="6.2" fill="#00ff00" stroke="none" stroke-width="1" stroke="#101010" stroke-width="0.8"/>
<text x="614.35" y="279.98" font-size="9.5" font-weight="bold" text-anchor="middle" fill="#111" textLength="13.47" lengthAdjust="spacingAndGlyphs" stroke="#111" stroke-width="0.3">140</text>
<rect x="560" y="304.7" width="108.7" height="7.0" fill="url(#pipeg)" stroke="none" stroke-width="1"/>
<rect x="560.4" y="305.09999999999997" width="8.9" height="6.2" fill="#00ff00" stroke="none" stroke-width="1" stroke="#101010" stroke-width="0.8"/>
<rect x="659.4000000000001" y="305.09999999999997" width="8.9" height="6.2" fill="#00ff00" stroke="none" stroke-width="1" stroke="#101010" stroke-width="0.8"/>
<text x="614.35" y="311.6" font-size="9.5" font-weight="bold" text-anchor="middle" fill="#111" textLength="13.47" lengthAdjust="spacingAndGlyphs" stroke="#111" stroke-width="0.3">141</text>
<rect x="560" y="320.51" width="108.7" height="7.0" fill="url(#pipeg)" stroke="none" stroke-width="1"/>
<rect x="560.4" y="320.90999999999997" width="8.9" height="6.2" fill="#00ff00" stroke="none" stroke-width="1" stroke="#101010" stroke-width="0.8"/>
<rect x="659.4000000000001" y="320.90999999999997" width="8.9" height="6.2" fill="#00ff00" stroke="none" stroke-width="1" stroke="#101010" stroke-width="0.8"/>
<text x="614.35" y="327.41" font-size="9.5" font-weight="bold" text-anchor="middle" fill="#111" textLength="13.47" lengthAdjust="spacingAndGlyphs" stroke="#111" stroke-width="0.3">142</text>
<rect x="560" y="336.32" width="108.7" height="7.0" fill="url(#pipeg)" stroke="none" stroke-width="1"/>
<rect x="560.4" y="336.71999999999997" width="8.9" height="6.2" fill="#00ff00" stroke="none" stroke-width="1" stroke="#101010" stroke-width="0.8"/>
<rect x="659.4000000000001" y="336.71999999999997" width="8.9" height="6.2" fill="#00ff00" stroke="none" stroke-width="1" stroke="#101010" stroke-width="0.8"/>
<text x="614.35" y="343.22" font-size="9.5" font-weight="bold" text-anchor="middle" fill="#111" textLength="13.47" lengthAdjust="spacingAndGlyphs" stroke="#111" stroke-width="0.3">143</text>
<rect x="560" y="352.13" width="108.7" height="7.0" fill="url(#pipeg)" stroke="none" stroke-width="1"/>
<rect x="560.4" y="352.53" width="8.9" height="6.2" fill="#00ff00" stroke="none" stroke-width="1" stroke="#101010" stroke-width="0.8"/>
<rect x="659.4000000000001" y="352.53" width="8.9" height="6.2" fill="#00ff00" stroke="none" stroke-width="1" stroke="#101010" stroke-width="0.8"/>
<text x="614.35" y="359.03" font-size="9.5" font-weight="bold" text-anchor="middle" fill="#111" textLength="13.47" lengthAdjust="spacingAndGlyphs" stroke="#111" stroke-width="0.3">144</text>
<rect x="560" y="367.94" width="108.7" height="7.0" fill="url(#pipeg)" stroke="none" stroke-width="1"/>
<rect x="560.4" y="368.34" width="8.9" height="6.2" fill="#00ff00" stroke="none" stroke-width="1" stroke="#101010" stroke-width="0.8"/>
<rect x="659.4000000000001" y="368.34" width="8.9" height="6.2" fill="#00ff00" stroke="none" stroke-width="1" stroke="#101010" stroke-width="0.8"/>
<text x="614.35" y="374.84" font-size="9.5" font-weight="bold" text-anchor="middle" fill="#111" textLength="13.47" lengthAdjust="spacingAndGlyphs" stroke="#111" stroke-width="0.3">145</text>
<rect x="560" y="399.56" width="108.7" height="7.0" fill="url(#pipeg)" stroke="none" stroke-width="1"/>
<rect x="560.4" y="399.96" width="8.9" height="6.2" fill="#00ff00" stroke="none" stroke-width="1" stroke="#101010" stroke-width="0.8"/>
<rect x="659.4000000000001" y="399.96" width="8.9" height="6.2" fill="#00ff00" stroke="none" stroke-width="1" stroke="#101010" stroke-width="0.8"/>
<text x="614.35" y="406.46" font-size="9.5" font-weight="bold" text-anchor="middle" fill="#111" textLength="13.47" lengthAdjust="spacingAndGlyphs" stroke="#111" stroke-width="0.3">146</text>
<rect x="560" y="415.37" width="108.7" height="7.0" fill="url(#pipeg)" stroke="none" stroke-width="1"/>
<rect x="560.4" y="415.77" width="8.9" height="6.2" fill="#008000" stroke="none" stroke-width="1" stroke="#101010" stroke-width="0.8"/>
<rect x="659.4000000000001" y="415.77" width="8.9" height="6.2" fill="#008000" stroke="none" stroke-width="1" stroke="#101010" stroke-width="0.8"/>
<text x="614.35" y="422.27" font-size="9.5" font-weight="bold" text-anchor="middle" fill="#111" textLength="13.47" lengthAdjust="spacingAndGlyphs" stroke="#111" stroke-width="0.3">147</text>
<rect x="560" y="431.18" width="108.7" height="7.0" fill="url(#pipeg)" stroke="none" stroke-width="1"/>
<rect x="560.4" y="431.58" width="8.9" height="6.2" fill="#00ff00" stroke="none" stroke-width="1" stroke="#101010" stroke-width="0.8"/>
<rect x="659.4000000000001" y="431.58" width="8.9" height="6.2" fill="#00ff00" stroke="none" stroke-width="1" stroke="#101010" stroke-width="0.8"/>
<text x="614.35" y="438.08" font-size="9.5" font-weight="bold" text-anchor="middle" fill="#111" textLength="13.47" lengthAdjust="spacingAndGlyphs" stroke="#111" stroke-width="0.3">148</text>
<rect x="560" y="446.99" width="108.7" height="7.0" fill="url(#pipeg)" stroke="none" stroke-width="1"/>
<rect x="560.4" y="447.39" width="8.9" height="6.2" fill="#00ff00" stroke="none" stroke-width="1" stroke="#101010" stroke-width="0.8"/>
<rect x="659.4000000000001" y="447.39" width="8.9" height="6.2" fill="#00ff00" stroke="none" stroke-width="1" stroke="#101010" stroke-width="0.8"/>
<text x="614.35" y="453.89" font-size="9.5" font-weight="bold" text-anchor="middle" fill="#111" textLength="13.47" lengthAdjust="spacingAndGlyphs" stroke="#111" stroke-width="0.3">149</text>
<rect x="560" y="462.8" width="108.7" height="7.0" fill="url(#pipeg)" stroke="none" stroke-width="1"/>
<rect x="560.4" y="463.2" width="8.9" height="6.2" fill="#00ff00" stroke="none" stroke-width="1" stroke="#101010" stroke-width="0.8"/>
<rect x="659.4000000000001" y="463.2" width="8.9" height="6.2" fill="#00ff00" stroke="none" stroke-width="1" stroke="#101010" stroke-width="0.8"/>
<text x="614.35" y="469.7" font-size="9.5" font-weight="bold" text-anchor="middle" fill="#111" textLength="13.47" lengthAdjust="spacingAndGlyphs" stroke="#111" stroke-width="0.3">150</text>
<rect x="560" y="494.42" width="108.7" height="7.0" fill="url(#pipeg)" stroke="none" stroke-width="1"/>
<rect x="560.4" y="494.82" width="8.9" height="6.2" fill="#00ff00" stroke="none" stroke-width="1" stroke="#101010" stroke-width="0.8"/>
<rect x="659.4000000000001" y="494.82" width="8.9" height="6.2" fill="#00ff00" stroke="none" stroke-width="1" stroke="#101010" stroke-width="0.8"/>
<text x="614.35" y="501.32" font-size="9.5" font-weight="bold" text-anchor="middle" fill="#111" textLength="13.47" lengthAdjust="spacingAndGlyphs" stroke="#111" stroke-width="0.3">151</text>
<rect x="560" y="510.23" width="108.7" height="7.0" fill="url(#pipeg)" stroke="none" stroke-width="1"/>
<rect x="560.4" y="510.63" width="8.9" height="6.2" fill="#00ff00" stroke="none" stroke-width="1" stroke="#101010" stroke-width="0.8"/>
<rect x="659.4000000000001" y="510.63" width="8.9" height="6.2" fill="#00ff00" stroke="none" stroke-width="1" stroke="#101010" stroke-width="0.8"/>
<text x="614.35" y="517.13" font-size="9.5" font-weight="bold" text-anchor="middle" fill="#111" textLength="13.47" lengthAdjust="spacingAndGlyphs" stroke="#111" stroke-width="0.3">152</text>
<rect x="560" y="526.04" width="108.7" height="7.0" fill="url(#pipeg)" stroke="none" stroke-width="1"/>
<rect x="560.4" y="526.4399999999999" width="8.9" height="6.2" fill="#00ff00" stroke="none" stroke-width="1" stroke="#101010" stroke-width="0.8"/>
<rect x="659.4000000000001" y="526.4399999999999" width="8.9" height="6.2" fill="#00ff00" stroke="none" stroke-width="1" stroke="#101010" stroke-width="0.8"/>
<text x="614.35" y="532.94" font-size="9.5" font-weight="bold" text-anchor="middle" fill="#111" textLength="13.47" lengthAdjust="spacingAndGlyphs" stroke="#111" stroke-width="0.3">153</text>
<rect x="560" y="541.85" width="108.7" height="7.0" fill="url(#pipeg)" stroke="none" stroke-width="1"/>
<rect x="560.4" y="542.25" width="8.9" height="6.2" fill="#00ff00" stroke="none" stroke-width="1" stroke="#101010" stroke-width="0.8"/>
<rect x="659.4000000000001" y="542.25" width="8.9" height="6.2" fill="#00ff00" stroke="none" stroke-width="1" stroke="#101010" stroke-width="0.8"/>
<text x="614.35" y="548.75" font-size="9.5" font-weight="bold" text-anchor="middle" fill="#111" textLength="13.47" lengthAdjust="spacingAndGlyphs" stroke="#111" stroke-width="0.3">154</text>
<rect x="556.6" y="560.6" width="117.5" height="9.9" fill="#f0f0f0" stroke="#303030" stroke-width="1"/>
<rect x="560" y="562.1" width="108.7" height="7.4" fill="url(#pipeg)" stroke="none" stroke-width="1"/>
<rect x="560.4" y="562.5" width="8.9" height="6.6" fill="#00ff00" stroke="none" stroke-width="1" stroke="#101010" stroke-width="0.8"/>
<rect x="659.4000000000001" y="562.5" width="8.9" height="6.6" fill="#00ff00" stroke="none" stroke-width="1" stroke="#101010" stroke-width="0.8"/>
<text x="614.35" y="569.7" font-size="9.5" font-weight="bold" text-anchor="middle" fill="#111" textLength="13.47" lengthAdjust="spacingAndGlyphs" stroke="#111" stroke-width="0.3">155</text>
<text x="675.8" y="170.2" font-size="7.6" font-weight="normal" text-anchor="start" fill="#8a8a8a" textLength="7.61" lengthAdjust="spacingAndGlyphs">50</text>
<text x="675.8" y="248.2" font-size="7.6" font-weight="normal" text-anchor="start" fill="#8a8a8a" textLength="7.61" lengthAdjust="spacingAndGlyphs">40</text>
<text x="675.8" y="326.2" font-size="7.6" font-weight="normal" text-anchor="start" fill="#8a8a8a" textLength="7.61" lengthAdjust="spacingAndGlyphs">30</text>
<text x="675.8" y="405.7" font-size="7.6" font-weight="normal" text-anchor="start" fill="#8a8a8a" textLength="7.61" lengthAdjust="spacingAndGlyphs">20</text>
<text x="675.8" y="485.0" font-size="7.6" font-weight="normal" text-anchor="start" fill="#8a8a8a" textLength="7.61" lengthAdjust="spacingAndGlyphs">10</text>
<text x="675.8" y="558.0" font-size="7.6" font-weight="normal" text-anchor="start" fill="#8a8a8a" textLength="3.8" lengthAdjust="spacingAndGlyphs">1</text>
<circle cx="613" cy="124" r="3.3" fill="#c8c8c8" stroke="#404040" stroke-width="1"/>
<text x="617.7" y="120.9" font-size="9.6" font-weight="bold" text-anchor="start" fill="#111" textLength="16.15" lengthAdjust="spacingAndGlyphs">PS2</text>
<polygon points="684.5,132 687.5,132 687.5,141 690.3,141 686,147 681.7,141 684.5,141" fill="#404040"/>
<polygon points="550,558 554.3,564 551.5,564 551.5,574 548.5,574 548.5,564 545.7,564" fill="#404040"/>
<circle cx="672.2" cy="579.2" r="3.3" fill="#ff0000" stroke="#400000" stroke-width="0.9"/>
<text x="673.5" y="592.5" font-size="9.5" font-weight="bold" text-anchor="middle" fill="#111" textLength="15.62" lengthAdjust="spacingAndGlyphs">PE8</text>
<circle cx="694.5" cy="579.2" r="3.3" fill="#ff0000" stroke="#400000" stroke-width="0.9"/>
<text x="694.5" y="592.5" font-size="9.5" font-weight="bold" text-anchor="middle" fill="#111" textLength="15.62" lengthAdjust="spacingAndGlyphs">PE7</text>
<rect x="692.2" y="138.4" width="109.5" height="347.6" fill="url(#stripe)" stroke="none" stroke-width="1"/>
<rect x="692.2" y="124.5" width="109.5" height="13.9" fill="#e0e0e0" stroke="none" stroke-width="1"/>
<rect x="692.2" y="124.5" width="109.5" height="2.9" fill="#bdbdbd" stroke="none" stroke-width="1"/>
<line x1="692" y1="127.7" x2="802" y2="127.7" stroke="#606060" stroke-width="0.8"/>
<path d="M693.5,138 V128.6 H800.5" stroke="#ffffff" stroke-width="1" fill="none"/>
<line x1="692" y1="138.6" x2="802" y2="138.6" stroke="#202020" stroke-width="1.2"/>
<rect x="692.2" y="562.3" width="109.5" height="10.3" fill="#e8e8e8" stroke="none" stroke-width="1"/>
<rect x="692.2" y="482" width="109.5" height="4.2" fill="#d0d0d0" stroke="none" stroke-width="1"/>
<rect x="692.6" y="486.2" width="109.0" height="8.39" fill="url(#pipet)" stroke="none" stroke-width="1"/>
<rect x="692.6" y="486.2" width="9.1" height="6.6" fill="#00ff00" stroke="none" stroke-width="1"/>
<rect x="792.4" y="486.2" width="9.2" height="6.6" fill="#00ff00" stroke="none" stroke-width="1"/>
<rect x="692.6" y="494.59" width="109.0" height="8.39" fill="url(#pipet)" stroke="none" stroke-width="1"/>
<rect x="692.6" y="494.59" width="9.1" height="6.6" fill="#00ff00" stroke="none" stroke-width="1"/>
<rect x="792.4" y="494.59" width="9.2" height="6.6" fill="#00ff00" stroke="none" stroke-width="1"/>
<rect x="692.6" y="502.98" width="109.0" height="8.39" fill="url(#pipet)" stroke="none" stroke-width="1"/>
<rect x="692.6" y="502.98" width="9.1" height="6.6" fill="#00ff00" stroke="none" stroke-width="1"/>
<rect x="792.4" y="502.98" width="9.2" height="6.6" fill="#00ff00" stroke="none" stroke-width="1"/>
<rect x="692.6" y="511.37" width="109.0" height="8.39" fill="url(#pipet)" stroke="none" stroke-width="1"/>
<rect x="692.6" y="511.37" width="9.1" height="6.6" fill="#00ff00" stroke="none" stroke-width="1"/>
<rect x="792.4" y="511.37" width="9.2" height="6.6" fill="#00ff00" stroke="none" stroke-width="1"/>
<rect x="692.6" y="519.76" width="109.0" height="8.39" fill="url(#pipet)" stroke="none" stroke-width="1"/>
<rect x="692.6" y="519.76" width="9.1" height="6.6" fill="#00ff00" stroke="none" stroke-width="1"/>
<rect x="792.4" y="519.76" width="9.2" height="6.6" fill="#00ff00" stroke="none" stroke-width="1"/>
<rect x="692.6" y="528.15" width="109.0" height="8.39" fill="url(#pipet)" stroke="none" stroke-width="1"/>
<rect x="692.6" y="528.15" width="9.1" height="6.6" fill="#00ff00" stroke="none" stroke-width="1"/>
<rect x="792.4" y="528.15" width="9.2" height="6.6" fill="#00ff00" stroke="none" stroke-width="1"/>
<rect x="692.6" y="536.54" width="109.0" height="8.39" fill="url(#pipet)" stroke="none" stroke-width="1"/>
<rect x="692.6" y="536.54" width="9.1" height="6.6" fill="#00ff00" stroke="none" stroke-width="1"/>
<rect x="792.4" y="536.54" width="9.2" height="6.6" fill="#00ff00" stroke="none" stroke-width="1"/>
<rect x="692.6" y="544.93" width="109.0" height="8.39" fill="url(#pipet)" stroke="none" stroke-width="1"/>
<rect x="692.6" y="544.93" width="9.1" height="6.6" fill="#00ff00" stroke="none" stroke-width="1"/>
<rect x="792.4" y="544.93" width="9.2" height="6.6" fill="#00ff00" stroke="none" stroke-width="1"/>
<rect x="692.6" y="553.3199999999999" width="109.0" height="8.39" fill="url(#pipet)" stroke="none" stroke-width="1"/>
<rect x="692.6" y="553.3199999999999" width="9.1" height="6.6" fill="#00ff00" stroke="none" stroke-width="1"/>
<rect x="792.4" y="553.3199999999999" width="9.2" height="6.6" fill="#00ff00" stroke="none" stroke-width="1"/>
<text x="747" y="493.1" font-size="9.6" font-weight="bold" text-anchor="middle" fill="#111" textLength="13.61" lengthAdjust="spacingAndGlyphs" stroke="#111" stroke-width="0.25">164</text>
<rect x="767.3" y="483.8" width="9.3" height="8.4" fill="#f2f2f2" stroke="none" stroke-width="1" stroke="#8a8a8a" stroke-width="0.9"/>
<path d="M767.5,492.2 H776.5999999999999 V483.8" stroke="#404040" stroke-width="1" fill="none"/>
<text x="771.95" y="490.8" font-size="8.5" font-weight="bold" text-anchor="middle" fill="#111" textLength="7.14" lengthAdjust="spacingAndGlyphs">W</text>
<text x="747" y="501.49" font-size="9.6" font-weight="bold" text-anchor="middle" fill="#111" textLength="13.61" lengthAdjust="spacingAndGlyphs" stroke="#111" stroke-width="0.25">163</text>
<rect x="782.5" y="492.19" width="9.3" height="8.4" fill="#f2f2f2" stroke="none" stroke-width="1" stroke="#8a8a8a" stroke-width="0.9"/>
<path d="M782.7,500.59 H791.8 V492.19" stroke="#404040" stroke-width="1" fill="none"/>
<text x="787.15" y="499.19" font-size="8.5" font-weight="bold" text-anchor="middle" fill="#111" textLength="7.14" lengthAdjust="spacingAndGlyphs">W</text>
<text x="747" y="509.88" font-size="9.6" font-weight="bold" text-anchor="middle" fill="#111" textLength="13.61" lengthAdjust="spacingAndGlyphs" stroke="#111" stroke-width="0.25">162</text>
<rect x="767.3" y="500.58000000000004" width="9.3" height="8.4" fill="#f2f2f2" stroke="none" stroke-width="1" stroke="#8a8a8a" stroke-width="0.9"/>
<path d="M767.5,508.98 H776.5999999999999 V500.58" stroke="#404040" stroke-width="1" fill="none"/>
<text x="771.95" y="507.58" font-size="8.5" font-weight="bold" text-anchor="middle" fill="#111" textLength="7.14" lengthAdjust="spacingAndGlyphs">W</text>
<text x="747" y="518.27" font-size="9.6" font-weight="bold" text-anchor="middle" fill="#111" textLength="13.61" lengthAdjust="spacingAndGlyphs" stroke="#111" stroke-width="0.25">161</text>
<rect x="782.5" y="508.97" width="9.3" height="8.4" fill="#f2f2f2" stroke="none" stroke-width="1" stroke="#8a8a8a" stroke-width="0.9"/>
<path d="M782.7,517.37 H791.8 V508.97" stroke="#404040" stroke-width="1" fill="none"/>
<text x="787.15" y="515.97" font-size="8.5" font-weight="bold" text-anchor="middle" fill="#111" textLength="7.14" lengthAdjust="spacingAndGlyphs">W</text>
<text x="747" y="526.66" font-size="9.6" font-weight="bold" text-anchor="middle" fill="#111" textLength="13.61" lengthAdjust="spacingAndGlyphs" stroke="#111" stroke-width="0.25">160</text>
<rect x="767.3" y="517.36" width="9.3" height="8.4" fill="#f2f2f2" stroke="none" stroke-width="1" stroke="#8a8a8a" stroke-width="0.9"/>
<path d="M767.5,525.76 H776.5999999999999 V517.36" stroke="#404040" stroke-width="1" fill="none"/>
<text x="771.95" y="524.36" font-size="8.5" font-weight="bold" text-anchor="middle" fill="#111" textLength="7.14" lengthAdjust="spacingAndGlyphs">W</text>
<text x="747" y="535.05" font-size="9.6" font-weight="bold" text-anchor="middle" fill="#111" textLength="13.61" lengthAdjust="spacingAndGlyphs" stroke="#111" stroke-width="0.25">159</text>
<rect x="782.5" y="525.75" width="9.3" height="8.4" fill="#f2f2f2" stroke="none" stroke-width="1" stroke="#8a8a8a" stroke-width="0.9"/>
<path d="M782.7,534.15 H791.8 V525.75" stroke="#404040" stroke-width="1" fill="none"/>
<text x="787.15" y="532.75" font-size="8.5" font-weight="bold" text-anchor="middle" fill="#111" textLength="7.14" lengthAdjust="spacingAndGlyphs">W</text>
<text x="747" y="543.44" font-size="9.6" font-weight="bold" text-anchor="middle" fill="#111" textLength="13.61" lengthAdjust="spacingAndGlyphs" stroke="#111" stroke-width="0.25">158</text>
<rect x="767.3" y="534.14" width="9.3" height="8.4" fill="#f2f2f2" stroke="none" stroke-width="1" stroke="#8a8a8a" stroke-width="0.9"/>
<path d="M767.5,542.54 H776.5999999999999 V534.14" stroke="#404040" stroke-width="1" fill="none"/>
<text x="771.95" y="541.14" font-size="8.5" font-weight="bold" text-anchor="middle" fill="#111" textLength="7.14" lengthAdjust="spacingAndGlyphs">W</text>
<text x="747" y="551.83" font-size="9.6" font-weight="bold" text-anchor="middle" fill="#111" textLength="13.61" lengthAdjust="spacingAndGlyphs" stroke="#111" stroke-width="0.25">157</text>
<rect x="782.5" y="542.53" width="9.3" height="8.4" fill="#f2f2f2" stroke="none" stroke-width="1" stroke="#8a8a8a" stroke-width="0.9"/>
<path d="M782.7,550.93 H791.8 V542.53" stroke="#404040" stroke-width="1" fill="none"/>
<text x="787.15" y="549.53" font-size="8.5" font-weight="bold" text-anchor="middle" fill="#111" textLength="7.14" lengthAdjust="spacingAndGlyphs">W</text>
<text x="747" y="560.22" font-size="9.6" font-weight="bold" text-anchor="middle" fill="#111" textLength="13.61" lengthAdjust="spacingAndGlyphs" stroke="#111" stroke-width="0.25">156</text>
<rect x="767.3" y="550.92" width="9.3" height="8.4" fill="#f2f2f2" stroke="none" stroke-width="1" stroke="#8a8a8a" stroke-width="0.9"/>
<path d="M767.5,559.32 H776.5999999999999 V550.92" stroke="#404040" stroke-width="1" fill="none"/>
<text x="771.95" y="557.92" font-size="8.5" font-weight="bold" text-anchor="middle" fill="#111" textLength="7.14" lengthAdjust="spacingAndGlyphs">W</text>
<rect x="691.6" y="124" width="110.7" height="449.3" fill="none" stroke="#000" stroke-width="1.6"/>
<rect x="813.9" y="556.4" width="9.9" height="9.6" fill="#f4f4f4" stroke="#404040" stroke-width="1"/>
<text x="818.85" y="564.3" font-size="8" font-weight="bold" text-anchor="middle" fill="#111" textLength="4.89" lengthAdjust="spacingAndGlyphs">F</text>
<text x="743.3" y="107.3" font-size="9.5" font-weight="bold" text-anchor="middle" fill="#111" textLength="88.92" lengthAdjust="spacingAndGlyphs">TRANSFERING TABLE</text>
<circle cx="746.8" cy="117.1" r="3.3" fill="#c8c8c8" stroke="#404040" stroke-width="1"/>
<text x="752.7" y="120.4" font-size="9.6" font-weight="bold" text-anchor="start" fill="#111" textLength="16.15" lengthAdjust="spacingAndGlyphs">PE5</text>
<polygon points="719,579.6 725.5,575.6 725.5,578.1 732,578.1 732,581.1 725.5,581.1 725.5,583.6" fill="#404040"/>
<circle cx="747" cy="580.5" r="3.3" fill="#c8c8c8" stroke="#404040" stroke-width="1"/>
<text x="753.2" y="583.9" font-size="9.6" font-weight="bold" text-anchor="start" fill="#111" textLength="16.15" lengthAdjust="spacingAndGlyphs">PE6</text>
<rect x="810.4" y="128.3" width="116.3" height="11.4" fill="#e8e8e8" stroke="#404040" stroke-width="1.2"/>
<text x="868.6" y="122.3" font-size="9.5" font-weight="bold" text-anchor="middle" fill="#111" textLength="66.58" lengthAdjust="spacingAndGlyphs">QUENCH LANCE</text>
<polygon points="862,147 868.5,143 868.5,145.5 875,145.5 875,148.5 868.5,148.5 868.5,151" fill="#404040"/>
<text x="922.0" y="123.7" font-size="9.6" font-weight="bold" text-anchor="start" fill="#111" textLength="16.15" lengthAdjust="spacingAndGlyphs">PE4</text>
<circle cx="933" cy="133.4" r="3.3" fill="#c8c8c8" stroke="#404040" stroke-width="1"/>
<rect x="939.4" y="125.5" width="118.4" height="354.0" fill="#ff8000" stroke="#5a2800" stroke-width="1.3"/>
<rect x="941.1999999999999" y="128" width="114.8" height="11.7" fill="#e0e0e0" stroke="#6a3000" stroke-width="1"/>
<path d="M942.0,138.89999999999998 H1055.2 V128.8" stroke="#ffffff" stroke-width="1" fill="none"/>
<line x1="939.4" y1="141.29999999999998" x2="1057.8" y2="141.29999999999998" stroke="#6a3000" stroke-width="1"/>
<line x1="939.4" y1="150.1" x2="1057.8" y2="150.1" stroke="#4a2200" stroke-width="1"/>
<line x1="939.4" y1="158.03" x2="1057.8" y2="158.03" stroke="#4a2200" stroke-width="1"/>
<line x1="939.4" y1="165.96" x2="1057.8" y2="165.96" stroke="#4a2200" stroke-width="1"/>
<line x1="939.4" y1="173.89" x2="1057.8" y2="173.89" stroke="#4a2200" stroke-width="1"/>
<line x1="939.4" y1="181.82" x2="1057.8" y2="181.82" stroke="#4a2200" stroke-width="1"/>
<line x1="939.4" y1="189.75" x2="1057.8" y2="189.75" stroke="#4a2200" stroke-width="1"/>
<line x1="939.4" y1="197.68" x2="1057.8" y2="197.68" stroke="#4a2200" stroke-width="1"/>
<line x1="939.4" y1="205.61" x2="1057.8" y2="205.61" stroke="#4a2200" stroke-width="1"/>
<line x1="939.4" y1="213.54" x2="1057.8" y2="213.54" stroke="#4a2200" stroke-width="1"/>
<line x1="939.4" y1="221.47" x2="1057.8" y2="221.47" stroke="#4a2200" stroke-width="1"/>
<line x1="939.4" y1="229.4" x2="1057.8" y2="229.4" stroke="#4a2200" stroke-width="1"/>
<line x1="939.4" y1="237.33" x2="1057.8" y2="237.33" stroke="#4a2200" stroke-width="1"/>
<line x1="939.4" y1="245.26" x2="1057.8" y2="245.26" stroke="#4a2200" stroke-width="1"/>
<line x1="939.4" y1="253.19" x2="1057.8" y2="253.19" stroke="#4a2200" stroke-width="1"/>
<line x1="939.4" y1="261.12" x2="1057.8" y2="261.12" stroke="#4a2200" stroke-width="1"/>
<line x1="939.4" y1="269.05" x2="1057.8" y2="269.05" stroke="#4a2200" stroke-width="1"/>
<line x1="939.4" y1="276.98" x2="1057.8" y2="276.98" stroke="#4a2200" stroke-width="1"/>
<line x1="939.4" y1="284.91" x2="1057.8" y2="284.91" stroke="#4a2200" stroke-width="1"/>
<line x1="939.4" y1="292.84" x2="1057.8" y2="292.84" stroke="#4a2200" stroke-width="1"/>
<line x1="939.4" y1="300.77" x2="1057.8" y2="300.77" stroke="#4a2200" stroke-width="1"/>
<line x1="939.4" y1="308.7" x2="1057.8" y2="308.7" stroke="#4a2200" stroke-width="1"/>
<line x1="939.4" y1="316.63" x2="1057.8" y2="316.63" stroke="#4a2200" stroke-width="1"/>
<line x1="939.4" y1="324.56" x2="1057.8" y2="324.56" stroke="#4a2200" stroke-width="1"/>
<line x1="939.4" y1="332.49" x2="1057.8" y2="332.49" stroke="#4a2200" stroke-width="1"/>
<line x1="939.4" y1="340.42" x2="1057.8" y2="340.42" stroke="#4a2200" stroke-width="1"/>
<line x1="939.4" y1="348.35" x2="1057.8" y2="348.35" stroke="#4a2200" stroke-width="1"/>
<line x1="939.4" y1="356.28" x2="1057.8" y2="356.28" stroke="#4a2200" stroke-width="1"/>
<line x1="939.4" y1="364.21" x2="1057.8" y2="364.21" stroke="#4a2200" stroke-width="1"/>
<line x1="939.4" y1="372.14" x2="1057.8" y2="372.14" stroke="#4a2200" stroke-width="1"/>
<line x1="939.4" y1="380.07" x2="1057.8" y2="380.07" stroke="#4a2200" stroke-width="1"/>
<line x1="939.4" y1="388.0" x2="1057.8" y2="388.0" stroke="#4a2200" stroke-width="1"/>
<line x1="939.4" y1="395.93" x2="1057.8" y2="395.93" stroke="#4a2200" stroke-width="1"/>
<line x1="939.4" y1="403.86" x2="1057.8" y2="403.86" stroke="#4a2200" stroke-width="1"/>
<line x1="939.4" y1="411.79" x2="1057.8" y2="411.79" stroke="#4a2200" stroke-width="1"/>
<line x1="939.4" y1="419.72" x2="1057.8" y2="419.72" stroke="#4a2200" stroke-width="1"/>
<line x1="939.4" y1="427.65" x2="1057.8" y2="427.65" stroke="#4a2200" stroke-width="1"/>
<line x1="939.4" y1="435.58" x2="1057.8" y2="435.58" stroke="#4a2200" stroke-width="1"/>
<line x1="939.4" y1="443.51" x2="1057.8" y2="443.51" stroke="#4a2200" stroke-width="1"/>
<line x1="939.4" y1="451.44" x2="1057.8" y2="451.44" stroke="#4a2200" stroke-width="1"/>
<line x1="939.4" y1="459.37" x2="1057.8" y2="459.37" stroke="#4a2200" stroke-width="1"/>
<rect x="943.8" y="150.5" width="109.2" height="7.0" fill="url(#pipeg)" stroke="none" stroke-width="1"/>
<rect x="944.1999999999999" y="150.9" width="8.9" height="6.2" fill="#00ff00" stroke="none" stroke-width="1" stroke="#101010" stroke-width="0.8"/>
<rect x="1043.7" y="150.9" width="8.9" height="6.2" fill="#00ff00" stroke="none" stroke-width="1" stroke="#101010" stroke-width="0.8"/>
<text x="998.4" y="157.4" font-size="9.5" font-weight="bold" text-anchor="middle" fill="#111" textLength="13.47" lengthAdjust="spacingAndGlyphs" stroke="#111" stroke-width="0.3">168</text>
<rect x="943.8" y="166.36" width="109.2" height="7.0" fill="url(#pipeg)" stroke="none" stroke-width="1"/>
<rect x="944.1999999999999" y="166.76000000000002" width="8.9" height="6.2" fill="#00ff00" stroke="none" stroke-width="1" stroke="#101010" stroke-width="0.8"/>
<rect x="1043.7" y="166.76000000000002" width="8.9" height="6.2" fill="#00ff00" stroke="none" stroke-width="1" stroke="#101010" stroke-width="0.8"/>
<text x="998.4" y="173.26" font-size="9.5" font-weight="bold" text-anchor="middle" fill="#111" textLength="13.47" lengthAdjust="spacingAndGlyphs" stroke="#111" stroke-width="0.3">169</text>
<rect x="943.8" y="182.22" width="109.2" height="7.0" fill="url(#pipeg)" stroke="none" stroke-width="1"/>
<rect x="944.1999999999999" y="182.62" width="8.9" height="6.2" fill="#00ff00" stroke="none" stroke-width="1" stroke="#101010" stroke-width="0.8"/>
<rect x="1043.7" y="182.62" width="8.9" height="6.2" fill="#00ff00" stroke="none" stroke-width="1" stroke="#101010" stroke-width="0.8"/>
<text x="998.4" y="189.12" font-size="9.5" font-weight="bold" text-anchor="middle" fill="#111" textLength="13.47" lengthAdjust="spacingAndGlyphs" stroke="#111" stroke-width="0.3">170</text>
<rect x="943.8" y="198.08" width="109.2" height="7.0" fill="url(#pipeg)" stroke="none" stroke-width="1"/>
<rect x="944.1999999999999" y="198.48000000000002" width="8.9" height="6.2" fill="#00ff00" stroke="none" stroke-width="1" stroke="#101010" stroke-width="0.8"/>
<rect x="1043.7" y="198.48000000000002" width="8.9" height="6.2" fill="#00ff00" stroke="none" stroke-width="1" stroke="#101010" stroke-width="0.8"/>
<text x="998.4" y="204.98" font-size="9.5" font-weight="bold" text-anchor="middle" fill="#111" textLength="13.47" lengthAdjust="spacingAndGlyphs" stroke="#111" stroke-width="0.3">171</text>
<rect x="943.8" y="213.94" width="109.2" height="7.0" fill="url(#pipeg)" stroke="none" stroke-width="1"/>
<rect x="944.1999999999999" y="214.34" width="8.9" height="6.2" fill="#00ff00" stroke="none" stroke-width="1" stroke="#101010" stroke-width="0.8"/>
<rect x="1043.7" y="214.34" width="8.9" height="6.2" fill="#00ff00" stroke="none" stroke-width="1" stroke="#101010" stroke-width="0.8"/>
<text x="998.4" y="220.84" font-size="9.5" font-weight="bold" text-anchor="middle" fill="#111" textLength="13.47" lengthAdjust="spacingAndGlyphs" stroke="#111" stroke-width="0.3">172</text>
<rect x="943.8" y="229.8" width="109.2" height="7.0" fill="url(#pipeg)" stroke="none" stroke-width="1"/>
<rect x="944.1999999999999" y="230.20000000000002" width="8.9" height="6.2" fill="#00ff00" stroke="none" stroke-width="1" stroke="#101010" stroke-width="0.8"/>
<rect x="1043.7" y="230.20000000000002" width="8.9" height="6.2" fill="#00ff00" stroke="none" stroke-width="1" stroke="#101010" stroke-width="0.8"/>
<text x="998.4" y="236.7" font-size="9.5" font-weight="bold" text-anchor="middle" fill="#111" textLength="13.47" lengthAdjust="spacingAndGlyphs" stroke="#111" stroke-width="0.3">173</text>
<rect x="943.8" y="245.66" width="109.2" height="7.0" fill="url(#pipeg)" stroke="none" stroke-width="1"/>
<rect x="944.1999999999999" y="246.06" width="8.9" height="6.2" fill="#00ff00" stroke="none" stroke-width="1" stroke="#101010" stroke-width="0.8"/>
<rect x="1043.7" y="246.06" width="8.9" height="6.2" fill="#00ff00" stroke="none" stroke-width="1" stroke="#101010" stroke-width="0.8"/>
<text x="998.4" y="252.56" font-size="9.5" font-weight="bold" text-anchor="middle" fill="#111" textLength="13.47" lengthAdjust="spacingAndGlyphs" stroke="#111" stroke-width="0.3">174</text>
<rect x="943.8" y="261.52" width="109.2" height="7.0" fill="url(#pipeg)" stroke="none" stroke-width="1"/>
<rect x="944.1999999999999" y="261.91999999999996" width="8.9" height="6.2" fill="#00ff00" stroke="none" stroke-width="1" stroke="#101010" stroke-width="0.8"/>
<rect x="1043.7" y="261.91999999999996" width="8.9" height="6.2" fill="#00ff00" stroke="none" stroke-width="1" stroke="#101010" stroke-width="0.8"/>
<text x="998.4" y="268.42" font-size="9.5" font-weight="bold" text-anchor="middle" fill="#111" textLength="13.47" lengthAdjust="spacingAndGlyphs" stroke="#111" stroke-width="0.3">175</text>
<rect x="943.8" y="277.38" width="109.2" height="7.0" fill="url(#pipeg)" stroke="none" stroke-width="1"/>
<rect x="944.1999999999999" y="277.78" width="8.9" height="6.2" fill="#00ff00" stroke="none" stroke-width="1" stroke="#101010" stroke-width="0.8"/>
<rect x="1043.7" y="277.78" width="8.9" height="6.2" fill="#00ff00" stroke="none" stroke-width="1" stroke="#101010" stroke-width="0.8"/>
<text x="998.4" y="284.28" font-size="9.5" font-weight="bold" text-anchor="middle" fill="#111" textLength="13.47" lengthAdjust="spacingAndGlyphs" stroke="#111" stroke-width="0.3">176</text>
<rect x="943.8" y="293.24" width="109.2" height="7.0" fill="url(#pipeg)" stroke="none" stroke-width="1"/>
<rect x="944.1999999999999" y="293.64" width="8.9" height="6.2" fill="#00ff00" stroke="none" stroke-width="1" stroke="#101010" stroke-width="0.8"/>
<rect x="1043.7" y="293.64" width="8.9" height="6.2" fill="#00ff00" stroke="none" stroke-width="1" stroke="#101010" stroke-width="0.8"/>
<text x="998.4" y="300.14" font-size="9.5" font-weight="bold" text-anchor="middle" fill="#111" textLength="13.47" lengthAdjust="spacingAndGlyphs" stroke="#111" stroke-width="0.3">177</text>
<rect x="943.8" y="309.1" width="109.2" height="7.0" fill="url(#pipeg)" stroke="none" stroke-width="1"/>
<rect x="944.1999999999999" y="309.5" width="8.9" height="6.2" fill="#00ff00" stroke="none" stroke-width="1" stroke="#101010" stroke-width="0.8"/>
<rect x="1043.7" y="309.5" width="8.9" height="6.2" fill="#00ff00" stroke="none" stroke-width="1" stroke="#101010" stroke-width="0.8"/>
<text x="998.4" y="316.0" font-size="9.5" font-weight="bold" text-anchor="middle" fill="#111" textLength="13.47" lengthAdjust="spacingAndGlyphs" stroke="#111" stroke-width="0.3">178</text>
<rect x="943.8" y="324.96" width="109.2" height="7.0" fill="url(#pipeg)" stroke="none" stroke-width="1"/>
<rect x="944.1999999999999" y="325.35999999999996" width="8.9" height="6.2" fill="#00ff00" stroke="none" stroke-width="1" stroke="#101010" stroke-width="0.8"/>
<rect x="1043.7" y="325.35999999999996" width="8.9" height="6.2" fill="#00ff00" stroke="none" stroke-width="1" stroke="#101010" stroke-width="0.8"/>
<text x="998.4" y="331.86" font-size="9.5" font-weight="bold" text-anchor="middle" fill="#111" textLength="13.47" lengthAdjust="spacingAndGlyphs" stroke="#111" stroke-width="0.3">179</text>
<rect x="943.8" y="340.82" width="109.2" height="7.0" fill="url(#pipeg)" stroke="none" stroke-width="1"/>
<rect x="944.1999999999999" y="341.21999999999997" width="8.9" height="6.2" fill="#00ff00" stroke="none" stroke-width="1" stroke="#101010" stroke-width="0.8"/>
<rect x="1043.7" y="341.21999999999997" width="8.9" height="6.2" fill="#00ff00" stroke="none" stroke-width="1" stroke="#101010" stroke-width="0.8"/>
<text x="998.4" y="347.72" font-size="9.5" font-weight="bold" text-anchor="middle" fill="#111" textLength="13.47" lengthAdjust="spacingAndGlyphs" stroke="#111" stroke-width="0.3">180</text>
<rect x="943.8" y="356.68" width="109.2" height="7.0" fill="url(#pipeg)" stroke="none" stroke-width="1"/>
<rect x="944.1999999999999" y="357.08" width="8.9" height="6.2" fill="#00ff00" stroke="none" stroke-width="1" stroke="#101010" stroke-width="0.8"/>
<rect x="1043.7" y="357.08" width="8.9" height="6.2" fill="#00ff00" stroke="none" stroke-width="1" stroke="#101010" stroke-width="0.8"/>
<text x="998.4" y="363.58" font-size="9.5" font-weight="bold" text-anchor="middle" fill="#111" textLength="13.47" lengthAdjust="spacingAndGlyphs" stroke="#111" stroke-width="0.3">181</text>
<rect x="943.8" y="372.54" width="109.2" height="7.0" fill="url(#pipeg)" stroke="none" stroke-width="1"/>
<rect x="944.1999999999999" y="372.94" width="8.9" height="6.2" fill="#00ff00" stroke="none" stroke-width="1" stroke="#101010" stroke-width="0.8"/>
<rect x="1043.7" y="372.94" width="8.9" height="6.2" fill="#00ff00" stroke="none" stroke-width="1" stroke="#101010" stroke-width="0.8"/>
<text x="998.4" y="379.44" font-size="9.5" font-weight="bold" text-anchor="middle" fill="#111" textLength="13.47" lengthAdjust="spacingAndGlyphs" stroke="#111" stroke-width="0.3">182</text>
<rect x="943.8" y="388.4" width="109.2" height="7.0" fill="url(#pipeg)" stroke="none" stroke-width="1"/>
<rect x="944.1999999999999" y="388.79999999999995" width="8.9" height="6.2" fill="#00ff00" stroke="none" stroke-width="1" stroke="#101010" stroke-width="0.8"/>
<rect x="1043.7" y="388.79999999999995" width="8.9" height="6.2" fill="#00ff00" stroke="none" stroke-width="1" stroke="#101010" stroke-width="0.8"/>
<text x="998.4" y="395.3" font-size="9.5" font-weight="bold" text-anchor="middle" fill="#111" textLength="13.47" lengthAdjust="spacingAndGlyphs" stroke="#111" stroke-width="0.3">183</text>
<rect x="943.8" y="404.26" width="109.2" height="7.0" fill="url(#pipeg)" stroke="none" stroke-width="1"/>
<rect x="944.1999999999999" y="404.65999999999997" width="8.9" height="6.2" fill="#00ff00" stroke="none" stroke-width="1" stroke="#101010" stroke-width="0.8"/>
<rect x="1043.7" y="404.65999999999997" width="8.9" height="6.2" fill="#00ff00" stroke="none" stroke-width="1" stroke="#101010" stroke-width="0.8"/>
<text x="998.4" y="411.16" font-size="9.5" font-weight="bold" text-anchor="middle" fill="#111" textLength="13.47" lengthAdjust="spacingAndGlyphs" stroke="#111" stroke-width="0.3">184</text>
<rect x="943.8" y="420.12" width="109.2" height="7.0" fill="url(#pipeg)" stroke="none" stroke-width="1"/>
<rect x="944.1999999999999" y="420.52" width="8.9" height="6.2" fill="#00ff00" stroke="none" stroke-width="1" stroke="#101010" stroke-width="0.8"/>
<rect x="1043.7" y="420.52" width="8.9" height="6.2" fill="#00ff00" stroke="none" stroke-width="1" stroke="#101010" stroke-width="0.8"/>
<text x="998.4" y="427.02" font-size="9.5" font-weight="bold" text-anchor="middle" fill="#111" textLength="13.47" lengthAdjust="spacingAndGlyphs" stroke="#111" stroke-width="0.3">185</text>
<rect x="943.8" y="435.98" width="109.2" height="7.0" fill="url(#pipeg)" stroke="none" stroke-width="1"/>
<rect x="944.1999999999999" y="436.38" width="8.9" height="6.2" fill="#00ff00" stroke="none" stroke-width="1" stroke="#101010" stroke-width="0.8"/>
<rect x="1043.7" y="436.38" width="8.9" height="6.2" fill="#00ff00" stroke="none" stroke-width="1" stroke="#101010" stroke-width="0.8"/>
<text x="998.4" y="442.88" font-size="9.5" font-weight="bold" text-anchor="middle" fill="#111" textLength="13.47" lengthAdjust="spacingAndGlyphs" stroke="#111" stroke-width="0.3">186</text>
<rect x="943.8" y="451.84" width="109.2" height="7.0" fill="url(#pipeg)" stroke="none" stroke-width="1"/>
<rect x="944.1999999999999" y="452.23999999999995" width="8.9" height="6.2" fill="#00ff00" stroke="none" stroke-width="1" stroke="#101010" stroke-width="0.8"/>
<rect x="1043.7" y="452.23999999999995" width="8.9" height="6.2" fill="#00ff00" stroke="none" stroke-width="1" stroke="#101010" stroke-width="0.8"/>
<text x="998.4" y="458.74" font-size="9.5" font-weight="bold" text-anchor="middle" fill="#111" textLength="13.47" lengthAdjust="spacingAndGlyphs" stroke="#111" stroke-width="0.3">187</text>
<rect x="940.0" y="467.8" width="117.2" height="9.7" fill="#f0f0f0" stroke="#303030" stroke-width="1"/>
<rect x="943.8" y="469.3" width="109.2" height="7.2" fill="url(#pipeg)" stroke="none" stroke-width="1"/>
<rect x="944.1999999999999" y="469.7" width="8.9" height="6.4" fill="#00ff00" stroke="none" stroke-width="1" stroke="#101010" stroke-width="0.8"/>
<rect x="1043.7" y="469.7" width="8.9" height="6.4" fill="#00ff00" stroke="none" stroke-width="1" stroke="#101010" stroke-width="0.8"/>
<text x="998.4" y="476.7" font-size="9.5" font-weight="bold" text-anchor="middle" fill="#111" textLength="13.47" lengthAdjust="spacingAndGlyphs" stroke="#111" stroke-width="0.3">188</text>
<text x="937.5" y="157.7" font-size="7.6" font-weight="normal" text-anchor="end" fill="#8a8a8a" textLength="7.61" lengthAdjust="spacingAndGlyphs">40</text>
<text x="937.5" y="236.2" font-size="7.6" font-weight="normal" text-anchor="end" fill="#8a8a8a" textLength="7.61" lengthAdjust="spacingAndGlyphs">30</text>
<text x="937.5" y="314.2" font-size="7.6" font-weight="normal" text-anchor="end" fill="#8a8a8a" textLength="7.61" lengthAdjust="spacingAndGlyphs">20</text>
<text x="937.5" y="393.7" font-size="7.6" font-weight="normal" text-anchor="end" fill="#8a8a8a" textLength="7.61" lengthAdjust="spacingAndGlyphs">10</text>
<text x="937.5" y="464.7" font-size="7.6" font-weight="normal" text-anchor="end" fill="#8a8a8a" textLength="3.8" lengthAdjust="spacingAndGlyphs">1</text>
<circle cx="992.9" cy="127.7" r="3.5" fill="#ff0000" stroke="#800000" stroke-width="1"/>
<text x="996.7" y="123.7" font-size="9.6" font-weight="bold" text-anchor="start" fill="#111" textLength="16.15" lengthAdjust="spacingAndGlyphs">PS1</text>
<text x="997" y="112.3" font-size="9.5" font-weight="bold" text-anchor="middle" fill="#111" textLength="92.75" lengthAdjust="spacingAndGlyphs">HARDENING FURNACE</text>
<polygon points="932,432 936.3,438 933.5,438 933.5,446 930.5,446 930.5,438 927.7,438" fill="#404040"/>
<circle cx="1055.4" cy="485.6" r="3.3" fill="#c8c8c8" stroke="#404040" stroke-width="1"/>
<text x="1054.5" y="498.5" font-size="9.5" font-weight="bold" text-anchor="middle" fill="#111" textLength="15.62" lengthAdjust="spacingAndGlyphs">PE3</text>
<g>
<rect x="1085.5" y="174.3" width="25" height="3" fill="#000"/>
<rect x="1106.2" y="116.5" width="4.6" height="60.5" fill="#000"/>
<rect x="1111.3" y="122.8" width="1.8" height="43" fill="#7a7a7a"/>
<polygon points="1120.4,118.2 1151,118.2 1156.8,152.3 1153.3,152.3 1147.7,123.4 1123.3,123.4 1118.7,157.4 1115.9,157.4" fill="#f07010" stroke="#ffffff" stroke-width="0.6"/>
<rect x="1140.3" y="152.3" width="36.9" height="22.9" fill="#f07010" stroke="#c85000" stroke-width="0.5"/>
<rect x="1129" y="158.3" width="11.3" height="17.7" fill="#d04000"/>
<rect x="1131" y="163.8" width="9" height="1.2" fill="#f0a080"/>
<rect x="1131" y="170" width="9" height="1.2" fill="#f0a080"/>
<rect x="1108" y="158.5" width="20.4" height="3" fill="#e87020"/>
<rect x="1128.4" y="158.3" width="30.8" height="3" fill="#c04000"/>
<rect x="1160" y="165" width="15" height="4" fill="#d04000"/>
<rect x="1118.7" y="144.3" width="12.5" height="12.5" rx="1.5" fill="#111"/>
<line x1="1122.7" y1="139.2" x2="1131.2" y2="146" stroke="#111" stroke-width="2"/>
<rect x="1138.6" y="147.3" width="11.5" height="2" fill="#111"/>
<rect x="1139.7" y="153.7" width="11" height="2.5" fill="#111"/>
<rect x="1150" y="143" width="3" height="14" fill="#111"/>
<circle cx="1118.7" cy="171" r="10.2" fill="#5a5a5a"/>
<circle cx="1118.7" cy="171" r="4.5" fill="#1a1a1a"/>
<circle cx="1165.3" cy="172.5" r="8.6" fill="#5a5a5a"/>
<circle cx="1165.3" cy="172.5" r="3.7" fill="#1a1a1a"/>
</g>
<rect x="1071.4" y="194.4" width="113.9" height="114.9" fill="url(#stripe)" stroke="none" stroke-width="1"/>
<rect x="1071.9" y="194.9" width="112.9" height="113.9" fill="none" stroke="#000" stroke-width="1.4"/>
<polygon points="1122.5,257 1125.5,257 1125.5,266 1128.3,266 1124,272 1119.7,266 1122.5,266" fill="#404040"/>
<rect x="1064.5" y="314.5" width="125.8" height="12.0" fill="#e8e8e8" stroke="#000" stroke-width="1.4"/>
<rect x="1071.4" y="326.5" width="113.2" height="46.5" fill="url(#stripe)" stroke="none" stroke-width="1"/>
<rect x="1071.9" y="326.5" width="112.2" height="46.0" fill="none" stroke="#000" stroke-width="1.2"/>
<rect x="1093" y="334.4" width="71.7" height="32.2" fill="#fff" stroke="#404040" stroke-width="1"/>
<text x="1128.8" y="349.2" font-size="9.5" font-weight="bold" text-anchor="middle" fill="#111" textLength="45.46" lengthAdjust="spacingAndGlyphs">DERUSTER</text>
<text x="1128.8" y="359.6" font-size="9.5" font-weight="bold" text-anchor="middle" fill="#111" textLength="23.42" lengthAdjust="spacingAndGlyphs">AREA</text>
<rect x="1066" y="380" width="125.9" height="11" fill="#e8e8e8" stroke="#000" stroke-width="1.4"/>
<rect x="1071.4" y="391" width="113.2" height="75.2" fill="url(#stripe)" stroke="none" stroke-width="1"/>
<rect x="1071.9" y="391" width="112.2" height="74.7" fill="none" stroke="#000" stroke-width="1.2"/>
<polygon points="1126.5,406 1129.5,406 1129.5,416 1132.3,416 1128,422 1123.7,416 1126.5,416" fill="#404040"/>
<rect x="1093" y="424.5" width="71.7" height="32.8" fill="#fff" stroke="#404040" stroke-width="1"/>
<text x="1128.8" y="440" font-size="9.5" font-weight="bold" text-anchor="middle" fill="#111" textLength="38.11" lengthAdjust="spacingAndGlyphs">LOADING</text>
<text x="1128.8" y="450.4" font-size="9.5" font-weight="bold" text-anchor="middle" fill="#111" textLength="26.93" lengthAdjust="spacingAndGlyphs">TABLE</text>
<rect x="1072.4" y="467.8" width="114.4" height="11.0" fill="#e6e6e6" stroke="#303030" stroke-width="1"/>
<rect x="1075" y="469.3" width="109" height="8.0" fill="url(#pipeg)" stroke="none" stroke-width="1"/>
<rect x="1075.4" y="469.7" width="8.6" height="7.2" fill="#00ff00" stroke="none" stroke-width="1" stroke="#101010" stroke-width="0.8"/>
<rect x="1175" y="469.7" width="8.6" height="7.2" fill="#00ff00" stroke="none" stroke-width="1" stroke="#101010" stroke-width="0.8"/>
<text x="1129" y="477.2" font-size="9.5" font-weight="bold" text-anchor="middle" fill="#111" textLength="13.47" lengthAdjust="spacingAndGlyphs" stroke="#111" stroke-width="0.3">189</text>
<circle cx="1075.5" cy="485.8" r="3.3" fill="#c8c8c8" stroke="#404040" stroke-width="1"/>
<text x="1081.2" y="489.2" font-size="9.6" font-weight="bold" text-anchor="start" fill="#111" textLength="16.15" lengthAdjust="spacingAndGlyphs">PE2</text>
<circle cx="1128.3" cy="485.5" r="3.3" fill="#ff0000" stroke="#400000" stroke-width="0.9"/>
<text x="1135.2" y="489.2" font-size="9.6" font-weight="bold" text-anchor="start" fill="#111" textLength="16.15" lengthAdjust="spacingAndGlyphs">PE1</text>
<polygon points="1172,487 1178.5,483 1178.5,485.5 1184,485.5 1184,488.5 1178.5,488.5 1178.5,491" fill="#404040"/>
<rect x="112.5" y="277.3" width="86.8" height="39.0" fill="#fff" stroke="#404040" stroke-width="1.2"/>
<text x="155.5" y="290.5" font-size="9.5" font-weight="bold" text-anchor="middle" fill="#111" textLength="34.9" lengthAdjust="spacingAndGlyphs">GRADLE</text>
<rect x="81" y="301" width="110.7" height="11.6" fill="#e0e0e0" stroke="#404040" stroke-width="1.2"/>
<circle cx="72.2" cy="307.5" r="3.3" fill="#c8c8c8" stroke="#404040" stroke-width="1"/>
<text x="68.2" y="324.9" font-size="9.6" font-weight="bold" text-anchor="start" fill="#111" textLength="20.9" lengthAdjust="spacingAndGlyphs">PE27</text>
<circle cx="144.8" cy="320.8" r="3.3" fill="#c8c8c8" stroke="#404040" stroke-width="1"/>
<text x="134.7" y="336.9" font-size="9.6" font-weight="bold" text-anchor="start" fill="#111" textLength="20.9" lengthAdjust="spacingAndGlyphs">PE26</text>
<polygon points="164,322 170.5,318 170.5,320.5 177,320.5 177,323.5 170.5,323.5 170.5,326" fill="#404040"/>
<circle cx="204.3" cy="295.6" r="3.3" fill="#c8c8c8" stroke="#404040" stroke-width="1"/>
<text x="209.2" y="298.9" font-size="9.6" font-weight="bold" text-anchor="start" fill="#111" textLength="20.9" lengthAdjust="spacingAndGlyphs">PE25</text>
<rect x="201.4" y="301.3" width="110.8" height="11.7" fill="#e0e0e0" stroke="#404040" stroke-width="1.2"/>
<polygon points="252,320.5 258.5,316.5 258.5,319.0 265,319.0 265,322.0 258.5,322.0 258.5,324.5" fill="#404040"/>
<polygon points="317.5,296 421,296 421,316.9 391,316.9 389,329.6 364.6,342.3 328.4,342.3 317.5,326.7" fill="#fff" stroke="#404040" stroke-width="1"/>
<rect x="329.4" y="298.9" width="46.9" height="15.6" fill="#fff" stroke="#404040" stroke-width="1.2"/>
<text x="324.2" y="293.7" font-size="9.6" font-weight="bold" text-anchor="start" fill="#111" textLength="20.9" lengthAdjust="spacingAndGlyphs">PE24</text>
<circle cx="353.6" cy="292.5" r="3.3" fill="#c8c8c8" stroke="#404040" stroke-width="1"/>
<circle cx="370.4" cy="292.5" r="3.3" fill="#c8c8c8" stroke="#404040" stroke-width="1"/>
<text x="361.2" y="285.9" font-size="9.6" font-weight="bold" text-anchor="start" fill="#111" textLength="20.9" lengthAdjust="spacingAndGlyphs">PE23</text>
<circle cx="386.4" cy="292.5" r="3.3" fill="#c8c8c8" stroke="#404040" stroke-width="1"/>
<text x="390.7" y="293.7" font-size="9.6" font-weight="bold" text-anchor="start" fill="#111" textLength="20.9" lengthAdjust="spacingAndGlyphs">PE22</text>
<text x="350.5" y="352.3" font-size="9.5" font-weight="bold" text-anchor="middle" fill="#111" textLength="31.68" lengthAdjust="spacingAndGlyphs">TUBING</text>
<text x="350.5" y="363" font-size="9.5" font-weight="bold" text-anchor="middle" fill="#111" textLength="59.24" lengthAdjust="spacingAndGlyphs">STRIGHTENER</text>
<g>
<path d="M217.5,599 V406 Q217.5,401.5 222,401.5 H456 Q460.5,401.5 460.5,406 V599 Z" fill="#bdd1ea" stroke="#5a6f88" stroke-width="1"/>
<rect x="218" y="402" width="241.7" height="20" rx="4" ry="4" fill="url(#titleg)"/>
<rect x="221" y="420" width="235" height="175" fill="#c7d8ec"/>
<rect x="223.4" y="422.4" width="228.6" height="168.2" fill="#ffffff" stroke="#1a1a1a" stroke-width="1.2"/>
<rect x="224" y="408" width="9" height="10" fill="#e8e8e8" stroke="#333" stroke-width="0.6"/>
<path d="M225,416 L228,411 L231,416" stroke="#c00" stroke-width="1.2" fill="none"/>
<rect x="388.6" y="407.8" width="20.3" height="11.5" rx="2" fill="url(#minig)" stroke="#7f93ad" stroke-width="0.8"/>
<rect x="395" y="413.5" width="7" height="2" fill="#fff" stroke="#444" stroke-width="0.5"/>
<rect x="411" y="407.8" width="20.1" height="11.5" rx="2" fill="url(#minig)" stroke="#7f93ad" stroke-width="0.8"/>
<rect x="418.3" y="411" width="5.6" height="4.4" fill="#dfe8f3" stroke="#333" stroke-width="0.9"/><rect x="419.6" y="412.6" width="3" height="1.6" fill="none" stroke="#555" stroke-width="0.5"/>
<rect x="433.2" y="407.8" width="20.6" height="11.5" rx="2" fill="url(#closeg)" stroke="#7a2a1a" stroke-width="0.8"/>
<path d="M441.3,411 L446,415.7 M446,411 L441.3,415.7" stroke="#fff" stroke-width="1.7"/>
</g>
<text x="236" y="417" font-size="9" font-weight="normal" text-anchor="start" fill="#222">06_pop - /MTS//</text>
<line x1="225" y1="450.6" x2="450" y2="450.6" stroke="#555" stroke-width="1.2"/>
<line x1="225" y1="475.7" x2="450" y2="475.7" stroke="#555" stroke-width="1.2"/>
<line x1="225" y1="506.3" x2="450" y2="506.3" stroke="#555" stroke-width="1.2"/>
<line x1="225" y1="533.2" x2="450" y2="533.2" stroke="#555" stroke-width="1.2"/>
<line x1="225" y1="564.6" x2="450" y2="564.6" stroke="#555" stroke-width="1.2"/>
<text x="303" y="440.7" font-size="13" font-weight="bold" text-anchor="end" fill="#111" textLength="74.09" lengthAdjust="spacingAndGlyphs">Work Order:</text>
<text x="316" y="440.7" font-size="13.4" font-weight="normal" text-anchor="start" fill="#1414d0" textLength="67.77" lengthAdjust="spacingAndGlyphs">WHT18396</text>
<text x="303" y="467.2" font-size="13" font-weight="bold" text-anchor="end" fill="#111" textLength="74.33" lengthAdjust="spacingAndGlyphs">Cust. Name:</text>
<text x="316" y="467.2" font-size="13.4" font-weight="normal" text-anchor="start" fill="#1414d0" textLength="97.54" lengthAdjust="spacingAndGlyphs">PT PERTAMINA</text>
<text x="303" y="496.7" font-size="13" font-weight="bold" text-anchor="end" fill="#111" textLength="52.38" lengthAdjust="spacingAndGlyphs">Heat No:</text>
<text x="316" y="496.7" font-size="13.4" font-weight="normal" text-anchor="start" fill="#1414d0" textLength="59.61" lengthAdjust="spacingAndGlyphs">18322402</text>
<text x="303" y="523.2" font-size="13" font-weight="bold" text-anchor="end" fill="#111" textLength="70.08" lengthAdjust="spacingAndGlyphs">Steel Code:</text>
<text x="316" y="523.2" font-size="13.4" font-weight="normal" text-anchor="start" fill="#1414d0" textLength="31.27" lengthAdjust="spacingAndGlyphs">GP-2</text>
<text x="303" y="552.7" font-size="13" font-weight="bold" text-anchor="end" fill="#111" textLength="75.05" lengthAdjust="spacingAndGlyphs">Steel Grade:</text>
<text x="316" y="552.7" font-size="13.4" font-weight="normal" text-anchor="start" fill="#1414d0" textLength="35.0" lengthAdjust="spacingAndGlyphs">N80Q</text>
<text x="303" y="582.7" font-size="13" font-weight="bold" text-anchor="end" fill="#111" textLength="51.67" lengthAdjust="spacingAndGlyphs">Pipe No:</text>
<text x="316" y="582.7" font-size="13.4" font-weight="normal" text-anchor="start" fill="#1414d0" textLength="22.35" lengthAdjust="spacingAndGlyphs">141</text>
<rect x="1070" y="521.3" width="121.7" height="15.9" fill="#008080" stroke="#0a4a4a" stroke-width="0.8"/>
<text x="1073" y="533.5" font-size="9.6" font-weight="bold" text-anchor="start" fill="#ffffff" textLength="56.92" lengthAdjust="spacingAndGlyphs">WO Selection</text>
<rect x="1070" y="539.1" width="122.6" height="77.9" fill="#000080" stroke="none" stroke-width="1"/>
<text x="1084" y="554.2" font-size="11" font-weight="normal" text-anchor="start" fill="#dcdcf4" textLength="55.69" lengthAdjust="spacingAndGlyphs">Dummy WO</text>
<rect x="1083.7" y="556" width="103.7" height="11.7" fill="#ffffff" stroke="none" stroke-width="1"/>
<text x="1084" y="565.6" font-size="11" font-weight="normal" text-anchor="start" fill="#000080" textLength="52.29" lengthAdjust="spacingAndGlyphs">WHT18396</text>
<polygon points="1075,556.5 1084,562 1075,567.5" fill="#ffffff"/>
<rect x="738.4" y="0" width="34.4" height="8.8" fill="#eaeaea"/>
<rect x="739.3" y="0" width="9" height="8" fill="#d4d4d4"/>
<rect x="740.2" y="0.8" width="1.6" height="1.4" fill="#f8f8f8"/>
<rect x="740.2" y="3.6" width="1.6" height="1.4" fill="#f8f8f8"/>
<rect x="740.2" y="6.2" width="1.6" height="1.4" fill="#f8f8f8"/>
<rect x="743" y="0.8" width="1.6" height="1.4" fill="#f8f8f8"/>
<rect x="743" y="3.6" width="1.6" height="1.4" fill="#f8f8f8"/>
<rect x="743" y="6.2" width="1.6" height="1.4" fill="#f8f8f8"/>
<rect x="745.8" y="0.8" width="1.6" height="1.4" fill="#f8f8f8"/>
<rect x="745.8" y="3.6" width="1.6" height="1.4" fill="#f8f8f8"/>
<rect x="745.8" y="6.2" width="1.6" height="1.4" fill="#f8f8f8"/>
<path d="M751.5,0.5 L754,3 M758,0.5 L755.5,3 M751.5,6.5 L754,4 M758,6.5 L755.5,4" stroke="#707070" stroke-width="1.2"/>
<polyline points="762.3,5.8 767,1.3 771.7,5.8" fill="none" stroke="#5a5a5a" stroke-width="1.5"/>
<path d="M50.4,20.8 V24.2 M48.8,22.3 H52" stroke="#000" stroke-width="1"/>
</svg></body></html>
